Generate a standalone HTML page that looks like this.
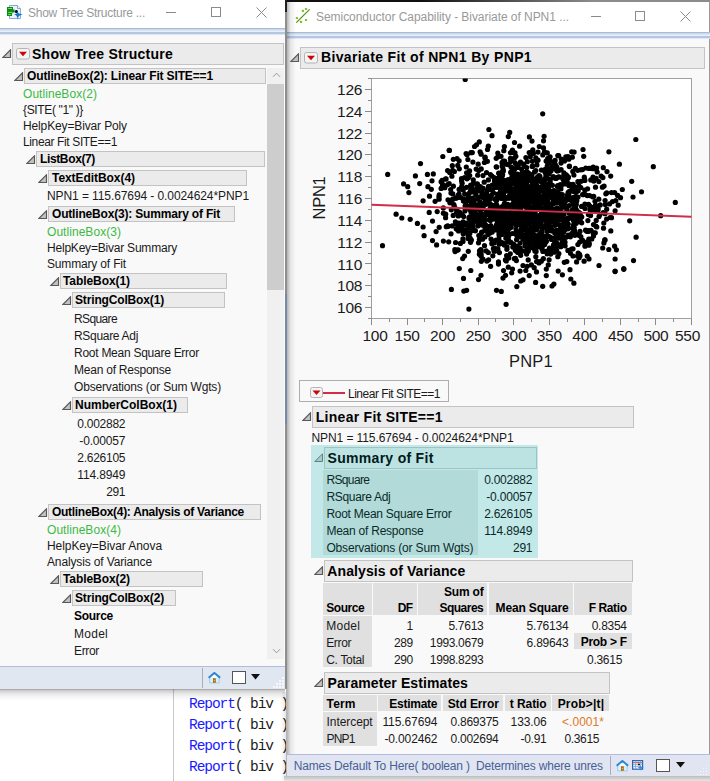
<!DOCTYPE html>
<html><head><meta charset="utf-8"><title>JMP</title><style>
html,body{margin:0;padding:0}
body{width:710px;height:781px;overflow:hidden;position:relative;background:#fff;font-family:"Liberation Sans", sans-serif;color:#1a1a1a}
div,span,svg{position:absolute}
span{white-space:pre}
span span{position:static}
</style></head><body>
<div style="left:0px;top:689px;width:287px;height:92px;background:#ffffff;"></div>
<div style="left:173px;top:689px;width:1px;height:92px;background:#c8c8c8;"></div>
<span style="top:694.00px;font-size:14.5px;line-height:20px;color:#202020;letter-spacing:-1.072px;font-family:'Liberation Mono', monospace;left:189px;"><span style="color:#1a1aff">Report</span>( biv )</span>
<span style="top:715.00px;font-size:14.5px;line-height:20px;color:#202020;letter-spacing:-1.072px;font-family:'Liberation Mono', monospace;left:189px;"><span style="color:#1a1aff">Report</span>( biv )</span>
<span style="top:736.00px;font-size:14.5px;line-height:20px;color:#202020;letter-spacing:-1.072px;font-family:'Liberation Mono', monospace;left:189px;"><span style="color:#1a1aff">Report</span>( biv )</span>
<span style="top:757.00px;font-size:14.5px;line-height:20px;color:#202020;letter-spacing:-1.072px;font-family:'Liberation Mono', monospace;left:189px;"><span style="color:#1a1aff">Report</span>( biv )</span>
<div style="left:0px;top:0px;width:285px;height:689px;background:#f9f9f9;"></div>
<div style="left:0px;top:0px;width:285px;height:28px;background:#ffffff;"></div>
<div style="left:0;top:28px;width:285px;height:7px;background:linear-gradient(#a7bcd8 0,#a7bcd8 1px,#c9d8ea 1px,#c9d8ea 2px,#dbe5f1 2px,#dbe5f1 3px,#e9eff6 3px,#e9eff6 4px,#b4c7e0 4px,#b4c7e0 6px,#dde6f1 6px)"></div>
<svg style="left:6px;top:4px" width="19" height="17" viewBox="6 4 19 17">
<path d="M9.5 5.5 H17.5 L20.5 8.5 V18.5 H9.5 Z" fill="#eaf1fa" stroke="#86aad8"/>
<path d="M17.5 5.5 V8.5 H20.5" fill="#f8fbff" stroke="#86aad8"/>
<path d="M7 7 H13 V9.6 H14.6 V12.6 H13 V13.2 H12 V16 H7 Z" fill="#0c8c0c"/>
<path d="M8.2 8.5 H12 M8.2 12.4 H12.6 M8.2 14.5 H10.8" stroke="#8fe08f" stroke-width="0.9"/>
<circle cx="16.4" cy="11.5" r="1.6" fill="#050505"/>
<path d="M17.6 11.3 Q17.75 14.2 23 14.4 Q17.75 14.6 17.6 19.9 Q17.4 14.6 14 14.4 Q17.4 14.2 17.6 11.3 Z" fill="#1478c8"/><circle cx="17.6" cy="14.4" r="1" fill="#1478c8"/>
</svg>
<span style="top:5.00px;font-size:12px;line-height:17px;color:#999999;letter-spacing:-0.249px;left:28px;">Show Tree Structure ...</span>
<div style="left:166px;top:12px;width:10px;height:1px;background:#8a8a8a;"></div>
<div style="left:211px;top:7px;width:10px;height:10px;border:1px solid #8a8a8a;box-sizing:border-box;"></div>
<svg style="left:256px;top:7px" width="11" height="11" viewBox="0 0 11 11"><path d="M0.5 0.5 L10.5 10.5 M10.5 0.5 L0.5 10.5" stroke="#8a8a8a" stroke-width="1" fill="none"/></svg>
<div style="left:12px;top:43px;width:272px;height:22px;background:#ebebeb;border:1px solid #c3c3c3;box-sizing:border-box;"></div>
<svg style="left:2px;top:48.6px" width="10" height="10" viewBox="0 0 10 10"><path d="M8.5 0.8 L8.5 8.5 L0.8 8.5 Z" fill="#c2c2c2" stroke="#585858" stroke-width="1.15"/></svg>
<svg style="left:16px;top:48px" width="14" height="11.5" viewBox="0 0 14 11.5"><rect x="0.5" y="0.5" width="13" height="10.5" rx="2" fill="#f4f4f4" stroke="#b4b4b4"/><path d="M3.0 3.75 L11.0 3.75 L7.0 8.25 Z" fill="#cc0505"/></svg>
<span style="top:44.00px;font-size:14px;line-height:20px;font-weight:700;color:#000;letter-spacing:0.255px;left:32px;">Show Tree Structure</span>
<div style="left:24px;top:68px;width:242px;height:16px;background:#ebebeb;border:1px solid #c3c3c3;box-sizing:border-box;"></div>
<svg style="left:13.5px;top:72.0px" width="10" height="10" viewBox="0 0 10 10"><path d="M8.5 0.8 L8.5 8.5 L0.8 8.5 Z" fill="#c2c2c2" stroke="#585858" stroke-width="1.15"/></svg>
<span style="top:68.00px;font-size:12px;line-height:17px;font-weight:700;color:#000;letter-spacing:-0.143px;left:27px;">OutlineBox(2): Linear Fit SITE==1</span>
<span style="top:86.00px;font-size:12px;line-height:17px;color:#3cb944;letter-spacing:0.048px;left:23px;">OutlineBox(2)</span>
<span style="top:102.00px;font-size:12px;line-height:17px;letter-spacing:-0.35px;left:23px;">{SITE( "1" )}</span>
<span style="top:118.00px;font-size:12px;line-height:17px;letter-spacing:-0.133px;left:23px;">HelpKey=Bivar Poly</span>
<span style="top:134.00px;font-size:12px;line-height:17px;letter-spacing:-0.373px;left:23px;">Linear Fit SITE==1</span>
<div style="left:36px;top:151px;width:229px;height:16px;background:#ebebeb;border:1px solid #c3c3c3;box-sizing:border-box;"></div>
<svg style="left:25.5px;top:155.0px" width="10" height="10" viewBox="0 0 10 10"><path d="M8.5 0.8 L8.5 8.5 L0.8 8.5 Z" fill="#c2c2c2" stroke="#585858" stroke-width="1.15"/></svg>
<span style="top:151.00px;font-size:12px;line-height:17px;font-weight:700;color:#000;letter-spacing:-0.367px;left:40px;">ListBox(7)</span>
<div style="left:48px;top:170px;width:199px;height:16px;background:#ebebeb;border:1px solid #c3c3c3;box-sizing:border-box;"></div>
<svg style="left:37.5px;top:174.0px" width="10" height="10" viewBox="0 0 10 10"><path d="M8.5 0.8 L8.5 8.5 L0.8 8.5 Z" fill="#c2c2c2" stroke="#585858" stroke-width="1.15"/></svg>
<span style="top:170.00px;font-size:12px;line-height:17px;font-weight:700;color:#000;letter-spacing:-0.057px;left:52px;">TextEditBox(4)</span>
<span style="top:188.00px;font-size:12px;line-height:17px;letter-spacing:-0.089px;left:47px;">NPN1 = 115.67694 - 0.0024624*PNP1</span>
<div style="left:48px;top:206px;width:187px;height:16px;background:#ebebeb;border:1px solid #c3c3c3;box-sizing:border-box;"></div>
<svg style="left:37.5px;top:210.0px" width="10" height="10" viewBox="0 0 10 10"><path d="M8.5 0.8 L8.5 8.5 L0.8 8.5 Z" fill="#c2c2c2" stroke="#585858" stroke-width="1.15"/></svg>
<span style="top:206.00px;font-size:12px;line-height:17px;font-weight:700;color:#000;letter-spacing:-0.184px;left:52px;">OutlineBox(3): Summary of Fit</span>
<span style="top:224.00px;font-size:12px;line-height:17px;color:#3cb944;letter-spacing:0.048px;left:47px;">OutlineBox(3)</span>
<span style="top:240.00px;font-size:12px;line-height:17px;letter-spacing:-0.209px;left:47px;">HelpKey=Bivar Summary</span>
<span style="top:256.00px;font-size:12px;line-height:17px;letter-spacing:-0.169px;left:47px;">Summary of Fit</span>
<div style="left:60px;top:273px;width:167px;height:16px;background:#ebebeb;border:1px solid #c3c3c3;box-sizing:border-box;"></div>
<svg style="left:49.5px;top:277.0px" width="10" height="10" viewBox="0 0 10 10"><path d="M8.5 0.8 L8.5 8.5 L0.8 8.5 Z" fill="#c2c2c2" stroke="#585858" stroke-width="1.15"/></svg>
<span style="top:273.00px;font-size:12px;line-height:17px;font-weight:700;color:#000;letter-spacing:-0.072px;left:63px;">TableBox(1)</span>
<div style="left:72px;top:292px;width:153px;height:16px;background:#ebebeb;border:1px solid #c3c3c3;box-sizing:border-box;"></div>
<svg style="left:61.5px;top:296.0px" width="10" height="10" viewBox="0 0 10 10"><path d="M8.5 0.8 L8.5 8.5 L0.8 8.5 Z" fill="#c2c2c2" stroke="#585858" stroke-width="1.15"/></svg>
<span style="top:292.00px;font-size:12px;line-height:17px;font-weight:700;color:#000;letter-spacing:-0.156px;left:75px;">StringColBox(1)</span>
<span style="top:311.00px;font-size:12px;line-height:17px;letter-spacing:-0.625px;left:74px;">RSquare</span>
<span style="top:328.00px;font-size:12px;line-height:17px;letter-spacing:-0.308px;left:74px;">RSquare Adj</span>
<span style="top:345.00px;font-size:12px;line-height:17px;letter-spacing:-0.261px;left:74px;">Root Mean Square Error</span>
<span style="top:362.00px;font-size:12px;line-height:17px;letter-spacing:-0.233px;left:74px;">Mean of Response</span>
<span style="top:379.00px;font-size:12px;line-height:17px;letter-spacing:-0.168px;left:74px;">Observations (or Sum Wgts)</span>
<div style="left:72px;top:397px;width:116px;height:16px;background:#ebebeb;border:1px solid #c3c3c3;box-sizing:border-box;"></div>
<svg style="left:61.5px;top:401.0px" width="10" height="10" viewBox="0 0 10 10"><path d="M8.5 0.8 L8.5 8.5 L0.8 8.5 Z" fill="#c2c2c2" stroke="#585858" stroke-width="1.15"/></svg>
<span style="top:397.00px;font-size:12px;line-height:17px;font-weight:700;color:#000;letter-spacing:-0.001px;left:75px;">NumberColBox(1)</span>
<span style="top:416.00px;font-size:12px;line-height:17px;letter-spacing:-0.258px;right:584.76px;">0.002882</span>
<span style="top:433.00px;font-size:12px;line-height:17px;letter-spacing:-0.172px;right:584.67px;">-0.00057</span>
<span style="top:450.00px;font-size:12px;line-height:17px;letter-spacing:-0.258px;right:584.76px;">2.626105</span>
<span style="top:467.00px;font-size:12px;line-height:17px;letter-spacing:-0.146px;right:584.65px;">114.8949</span>
<span style="top:484.00px;font-size:12px;line-height:17px;letter-spacing:-0.344px;right:584.84px;">291</span>
<div style="left:48px;top:504px;width:213px;height:16px;background:#ebebeb;border:1px solid #c3c3c3;box-sizing:border-box;"></div>
<svg style="left:37.5px;top:508.0px" width="10" height="10" viewBox="0 0 10 10"><path d="M8.5 0.8 L8.5 8.5 L0.8 8.5 Z" fill="#c2c2c2" stroke="#585858" stroke-width="1.15"/></svg>
<span style="top:504.00px;font-size:12px;line-height:17px;font-weight:700;color:#000;letter-spacing:-0.294px;left:52px;">OutlineBox(4): Analysis of Variance</span>
<span style="top:522.00px;font-size:12px;line-height:17px;color:#3cb944;letter-spacing:0.048px;left:47px;">OutlineBox(4)</span>
<span style="top:538.00px;font-size:12px;line-height:17px;letter-spacing:-0.074px;left:47px;">HelpKey=Bivar Anova</span>
<span style="top:554.00px;font-size:12px;line-height:17px;letter-spacing:-0.142px;left:47px;">Analysis of Variance</span>
<div style="left:60px;top:571px;width:143px;height:16px;background:#ebebeb;border:1px solid #c3c3c3;box-sizing:border-box;"></div>
<svg style="left:49.5px;top:575.0px" width="10" height="10" viewBox="0 0 10 10"><path d="M8.5 0.8 L8.5 8.5 L0.8 8.5 Z" fill="#c2c2c2" stroke="#585858" stroke-width="1.15"/></svg>
<span style="top:571.00px;font-size:12px;line-height:17px;font-weight:700;color:#000;letter-spacing:-0.072px;left:63px;">TableBox(2)</span>
<div style="left:72px;top:590px;width:104px;height:16px;background:#ebebeb;border:1px solid #c3c3c3;box-sizing:border-box;"></div>
<svg style="left:61.5px;top:594.0px" width="10" height="10" viewBox="0 0 10 10"><path d="M8.5 0.8 L8.5 8.5 L0.8 8.5 Z" fill="#c2c2c2" stroke="#585858" stroke-width="1.15"/></svg>
<span style="top:590.00px;font-size:12px;line-height:17px;font-weight:700;color:#000;letter-spacing:-0.156px;left:75px;">StringColBox(2)</span>
<span style="top:608.00px;font-size:12px;line-height:17px;font-weight:700;color:#000;letter-spacing:-0.281px;left:74px;">Source</span>
<span style="top:626.00px;font-size:12px;line-height:17px;letter-spacing:0.263px;left:74px;">Model</span>
<span style="top:643.00px;font-size:12px;line-height:17px;letter-spacing:-0.334px;left:74px;">Error</span>
<div style="left:267px;top:68px;width:17px;height:591px;background:#f0f0f0;"></div>
<div style="left:284px;top:68px;width:1px;height:591px;background:#fcfcfc;"></div>
<div style="left:267px;top:83.5px;width:17px;height:206.3px;background:#cdcdcd;"></div>
<svg style="left:272px;top:72px" width="9" height="6" viewBox="0 0 9 6"><path d="M1 4.8 L4.5 1.2 L8 4.8" stroke="#9a9a9a" fill="none"/></svg>
<svg style="left:272px;top:648px" width="9" height="6" viewBox="0 0 9 6"><path d="M1 1.2 L4.5 4.8 L8 1.2" stroke="#9a9a9a" fill="none"/></svg>
<div style="left:0px;top:666px;width:285px;height:23.3px;background:#e1e7f1;"></div>
<div style="left:0px;top:666px;width:285px;height:1px;background:#b4b9e2;"></div>
<div style="left:202px;top:668px;width:1px;height:20px;background:#a9adc0;"></div>
<svg style="left:208px;top:671.5px" width="13" height="12" viewBox="0 0 13 12"><path d="M1.6 5.6 H11.2 V10.9 H1.6 Z" fill="#dcedf8" stroke="#8fc6e8" stroke-width="0.8"/><path d="M0.6 5.8 L6.4 0.9 L12.2 5.8" stroke="#2a86d6" stroke-width="1.9" fill="none" stroke-linejoin="miter"/><path d="M6.4 2.6 L2.4 6 H10.4 Z" fill="#f4fafe"/><rect x="5" y="6.2" width="2.8" height="4.6" fill="#a8700f"/><rect x="5.9" y="8" width="0.9" height="1" fill="#e8c878"/></svg>
<div style="left:232px;top:671px;width:13.8px;height:12.8px;background:#fff;border:1px solid #555;box-sizing:border-box;"></div>
<svg style="left:251px;top:674px" width="9" height="6" viewBox="0 0 9 6"><path d="M0 0 H9 L4.5 5.5 Z" fill="#111"/></svg>
<div style="left:282px;top:677px;width:1.6px;height:1.6px;background:#f6f8fc;"></div>
<div style="left:282px;top:680px;width:1.6px;height:1.6px;background:#f6f8fc;"></div>
<div style="left:279px;top:680px;width:1.6px;height:1.6px;background:#f6f8fc;"></div>
<div style="left:282px;top:683px;width:1.6px;height:1.6px;background:#f6f8fc;"></div>
<div style="left:279px;top:683px;width:1.6px;height:1.6px;background:#f6f8fc;"></div>
<div style="left:276px;top:683px;width:1.6px;height:1.6px;background:#f6f8fc;"></div>
<div style="left:282px;top:686px;width:1.6px;height:1.6px;background:#f6f8fc;"></div>
<div style="left:279px;top:686px;width:1.6px;height:1.6px;background:#f6f8fc;"></div>
<div style="left:276px;top:686px;width:1.6px;height:1.6px;background:#f6f8fc;"></div>
<div style="left:273px;top:686px;width:1.6px;height:1.6px;background:#f6f8fc;"></div>
<div style="left:0;top:689px;width:285px;height:12px;background:linear-gradient(rgba(0,0,0,0.40),rgba(0,0,0,0.20) 12%,rgba(0,0,0,0.09) 40%,rgba(0,0,0,0.03) 70%,rgba(0,0,0,0))"></div>
<div style="left:285px;top:0px;width:425px;height:2px;background:#101010;"></div>
<div style="left:420px;top:0;width:290px;height:2px;background:linear-gradient(90deg,#101010,#8c8c8c 60%)"></div>
<div style="left:285px;top:0px;width:2px;height:689px;background:#8e8e8e;"></div>
<div style="left:285px;top:0px;width:2px;height:12px;background:#202020;"></div>
<div style="left:285px;top:294px;width:2px;height:130px;background:#7488a8;"></div>
<div style="left:286px;top:689px;width:1px;height:87px;background:#b4b4b4;"></div>
<div style="left:281px;top:692px;width:5px;height:88px;background:linear-gradient(90deg,rgba(0,0,0,0),rgba(0,0,0,0.10))"></div>
<div style="left:287px;top:2px;width:423px;height:779px;background:#f9f9f9;"></div>
<div style="left:287px;top:1.5px;width:423px;height:30.5px;background:#ffffff;"></div>
<div style="left:709px;top:1px;width:1px;height:775px;background:#9a9a9a;"></div>
<div style="left:287px;top:32px;width:423px;height:7px;background:linear-gradient(#a7bcd8 0,#a7bcd8 1px,#c9d8ea 1px,#c9d8ea 2px,#dbe5f1 2px,#dbe5f1 3px,#e9eff6 3px,#e9eff6 4px,#b4c7e0 4px,#b4c7e0 6px,#dde6f1 6px)"></div>
<div style="left:287px;top:2px;width:9px;height:779px;background:linear-gradient(90deg,rgba(0,0,0,0.28),rgba(0,0,0,0.08) 40%,rgba(0,0,0,0))"></div>
<svg style="left:294px;top:6px" width="18" height="19" viewBox="294 6 18 19">
<path d="M296.3 22.7 L309.6 9.4" stroke="#4f8f16" stroke-width="1.2"/>
<g fill="#7ac51d"><rect x="304.9" y="7.9" width="2.2" height="2.2" rx="0.6"/><rect x="301.8" y="9.8" width="2.2" height="2.2" rx="0.6"/><rect x="295.8" y="16.9" width="2.2" height="2.2" rx="0.6"/><rect x="299.9" y="20.7" width="2.2" height="2.2" rx="0.6"/><rect x="304.9" y="18.9" width="2.2" height="2.2" rx="0.6"/></g></svg>
<span style="top:9.00px;font-size:12px;line-height:17px;color:#999999;letter-spacing:-0.051px;left:316px;">Semiconductor Capability - Bivariate of NPN1 ...</span>
<div style="left:591px;top:16px;width:10px;height:1px;background:#8a8a8a;"></div>
<div style="left:635px;top:11px;width:10px;height:10px;border:1px solid #8a8a8a;box-sizing:border-box;"></div>
<svg style="left:680px;top:11px" width="11" height="11" viewBox="0 0 11 11"><path d="M0.5 0.5 L10.5 10.5 M10.5 0.5 L0.5 10.5" stroke="#8a8a8a" stroke-width="1" fill="none"/></svg>
<div style="left:300px;top:47px;width:405px;height:22px;background:#ebebeb;border:1px solid #c3c3c3;box-sizing:border-box;"></div>
<svg style="left:290px;top:53px" width="10" height="10" viewBox="0 0 10 10"><path d="M8.5 0.8 L8.5 8.5 L0.8 8.5 Z" fill="#c2c2c2" stroke="#585858" stroke-width="1.15"/></svg>
<svg style="left:304px;top:52px" width="14" height="11.5" viewBox="0 0 14 11.5"><rect x="0.5" y="0.5" width="13" height="10.5" rx="2" fill="#f4f4f4" stroke="#b4b4b4"/><path d="M3.0 3.75 L11.0 3.75 L7.0 8.25 Z" fill="#cc0505"/></svg>
<span style="top:47.00px;font-size:14px;line-height:20px;font-weight:700;color:#000;letter-spacing:0.354px;left:321px;">Bivariate Fit of NPN1 By PNP1</span>
<div style="left:371.0px;top:78.0px;width:321px;height:241px;background:#ffffff;border:1px solid #a0a0a0;box-sizing:border-box;"></div>
<svg style="left:0;top:0" width="710" height="400" viewBox="0 0 710 400"><path d="M365.0 307.5 H371.5 M365.0 285.5 H371.5 M365.0 263.5 H371.5 M365.0 242.5 H371.5 M365.0 220.5 H371.5 M365.0 198.5 H371.5 M365.0 176.5 H371.5 M365.0 154.5 H371.5 M365.0 133.5 H371.5 M365.0 111.5 H371.5 M365.0 89.5 H371.5 M368.0 318.5 H371.5 M368.0 296.5 H371.5 M368.0 274.5 H371.5 M368.0 253.5 H371.5 M368.0 231.5 H371.5 M368.0 209.5 H371.5 M368.0 187.5 H371.5 M368.0 165.5 H371.5 M368.0 143.5 H371.5 M368.0 122.5 H371.5 M368.0 100.5 H371.5 M368.0 78.5 H371.5 M371.5 318.5 V325.0 M407.5 318.5 V325.0 M442.5 318.5 V325.0 M478.5 318.5 V325.0 M513.5 318.5 V325.0 M549.5 318.5 V325.0 M584.5 318.5 V325.0 M620.5 318.5 V325.0 M655.5 318.5 V325.0 M691.5 318.5 V325.0 M389.5 318.5 V322.0 M424.5 318.5 V322.0 M460.5 318.5 V322.0 M495.5 318.5 V322.0 M531.5 318.5 V322.0 M567.5 318.5 V322.0 M602.5 318.5 V322.0 M638.5 318.5 V322.0 M673.5 318.5 V322.0" stroke="#8c8c8c" stroke-width="1" fill="none"/><clipPath id="pc"><rect x="371.5" y="78.5" width="320" height="240"/></clipPath><g clip-path="url(#pc)" fill="#000"><circle cx="387.7" cy="174.4" r="2.6"/><circle cx="382.5" cy="245.7" r="2.6"/><circle cx="403.6" cy="183.9" r="2.6"/><circle cx="407.7" cy="186.7" r="2.6"/><circle cx="408.9" cy="192.6" r="2.6"/><circle cx="420.5" cy="163.6" r="2.6"/><circle cx="415.4" cy="175.9" r="2.6"/><circle cx="419.7" cy="183.6" r="2.6"/><circle cx="427.4" cy="174.4" r="2.6"/><circle cx="433.3" cy="173.9" r="2.6"/><circle cx="432.0" cy="180.8" r="2.6"/><circle cx="427.9" cy="186.7" r="2.6"/><circle cx="431.3" cy="189.3" r="2.6"/><circle cx="429.5" cy="196.2" r="2.6"/><circle cx="423.1" cy="200.8" r="2.6"/><circle cx="396.1" cy="214.2" r="2.6"/><circle cx="401.8" cy="218.0" r="2.6"/><circle cx="410.2" cy="219.3" r="2.6"/><circle cx="417.4" cy="223.4" r="2.6"/><circle cx="423.1" cy="227.0" r="2.6"/><circle cx="424.1" cy="235.7" r="2.6"/><circle cx="432.5" cy="221.1" r="2.6"/><circle cx="429.2" cy="212.4" r="2.6"/><circle cx="437.2" cy="211.6" r="2.6"/><circle cx="436.1" cy="231.6" r="2.6"/><circle cx="432.5" cy="240.6" r="2.6"/><circle cx="436.6" cy="244.9" r="2.6"/><circle cx="435.1" cy="201.3" r="2.6"/><circle cx="442.8" cy="156.5" r="2.6"/><circle cx="449.2" cy="150.3" r="2.6"/><circle cx="453.3" cy="159.3" r="2.6"/><circle cx="452.3" cy="165.7" r="2.6"/><circle cx="449.7" cy="172.4" r="2.6"/><circle cx="445.4" cy="179.0" r="2.6"/><circle cx="442.8" cy="184.7" r="2.6"/><circle cx="444.8" cy="187.7" r="2.6"/><circle cx="439.2" cy="194.9" r="2.6"/><circle cx="635.8" cy="139.5" r="2.6"/><circle cx="619.4" cy="164.2" r="2.6"/><circle cx="653.3" cy="166.7" r="2.6"/><circle cx="631.7" cy="181.3" r="2.6"/><circle cx="641.5" cy="191.8" r="2.6"/><circle cx="622.3" cy="189.5" r="2.6"/><circle cx="614.6" cy="192.6" r="2.6"/><circle cx="617.6" cy="195.4" r="2.6"/><circle cx="620.5" cy="197.7" r="2.6"/><circle cx="633.0" cy="197.0" r="2.6"/><circle cx="615.8" cy="200.6" r="2.6"/><circle cx="612.5" cy="201.6" r="2.6"/><circle cx="615.1" cy="210.8" r="2.6"/><circle cx="618.2" cy="205.2" r="2.6"/><circle cx="675.3" cy="202.4" r="2.6"/><circle cx="660.7" cy="215.7" r="2.6"/><circle cx="629.7" cy="220.8" r="2.6"/><circle cx="636.1" cy="237.2" r="2.6"/><circle cx="614.6" cy="246.2" r="2.6"/><circle cx="616.4" cy="249.8" r="2.6"/><circle cx="615.1" cy="259.0" r="2.6"/><circle cx="633.5" cy="260.6" r="2.6"/><circle cx="623.8" cy="269.3" r="2.6"/><circle cx="615.1" cy="271.6" r="2.6"/><circle cx="465.2" cy="79.4" r="2.6"/><circle cx="542.7" cy="113.8" r="2.6"/><circle cx="488.9" cy="129.5" r="2.6"/><circle cx="492.0" cy="135.7" r="2.6"/><circle cx="509.7" cy="132.4" r="2.6"/><circle cx="508.3" cy="136.6" r="2.6"/><circle cx="529.4" cy="136.9" r="2.6"/><circle cx="532.0" cy="141.1" r="2.6"/><circle cx="544.1" cy="136.3" r="2.6"/><circle cx="543.5" cy="140.8" r="2.6"/><circle cx="514.5" cy="142.5" r="2.6"/><circle cx="519.6" cy="146.2" r="2.6"/><circle cx="539.3" cy="146.5" r="2.6"/><circle cx="543.5" cy="147.9" r="2.6"/><circle cx="479.3" cy="141.9" r="2.6"/><circle cx="476.5" cy="144.8" r="2.6"/><circle cx="474.5" cy="146.5" r="2.6"/><circle cx="488.3" cy="146.2" r="2.6"/><circle cx="487.5" cy="149.5" r="2.6"/><circle cx="504.4" cy="146.5" r="2.6"/><circle cx="503.8" cy="150.7" r="2.6"/><circle cx="512.5" cy="150.1" r="2.6"/><circle cx="449.4" cy="150.4" r="2.6"/><circle cx="472.3" cy="152.6" r="2.6"/><circle cx="466.1" cy="153.5" r="2.6"/><circle cx="480.1" cy="151.8" r="2.6"/><circle cx="532.8" cy="149.8" r="2.6"/><circle cx="529.2" cy="152.6" r="2.6"/><circle cx="583.0" cy="149.5" r="2.6"/><circle cx="608.9" cy="151.8" r="2.6"/><circle cx="571.7" cy="151.8" r="2.6"/><circle cx="459.3" cy="268.6" r="2.6"/><circle cx="470.8" cy="270.5" r="2.6"/><circle cx="463.5" cy="278.4" r="2.6"/><circle cx="481.0" cy="275.3" r="2.6"/><circle cx="478.5" cy="279.6" r="2.6"/><circle cx="451.4" cy="289.4" r="2.6"/><circle cx="463.8" cy="291.1" r="2.6"/><circle cx="466.6" cy="290.3" r="2.6"/><circle cx="496.5" cy="290.3" r="2.6"/><circle cx="501.3" cy="291.4" r="2.6"/><circle cx="468.9" cy="309.1" r="2.6"/><circle cx="506.1" cy="304.3" r="2.6"/><circle cx="503.5" cy="270.5" r="2.6"/><circle cx="508.3" cy="267.2" r="2.6"/><circle cx="512.5" cy="269.1" r="2.6"/><circle cx="511.7" cy="272.8" r="2.6"/><circle cx="505.5" cy="275.3" r="2.6"/><circle cx="503.0" cy="278.1" r="2.6"/><circle cx="516.8" cy="286.6" r="2.6"/><circle cx="520.7" cy="281.0" r="2.6"/><circle cx="523.0" cy="279.8" r="2.6"/><circle cx="529.2" cy="275.6" r="2.6"/><circle cx="525.8" cy="270.5" r="2.6"/><circle cx="520.1" cy="271.1" r="2.6"/><circle cx="535.6" cy="282.4" r="2.6"/><circle cx="542.7" cy="286.3" r="2.6"/><circle cx="552.0" cy="286.0" r="2.6"/><circle cx="553.9" cy="284.1" r="2.6"/><circle cx="546.3" cy="275.6" r="2.6"/><circle cx="546.3" cy="269.1" r="2.6"/><circle cx="534.2" cy="267.7" r="2.6"/><circle cx="536.5" cy="271.9" r="2.6"/><circle cx="558.2" cy="271.1" r="2.6"/><circle cx="562.4" cy="274.8" r="2.6"/><circle cx="570.0" cy="269.7" r="2.6"/><circle cx="570.8" cy="279.0" r="2.6"/><circle cx="573.9" cy="283.2" r="2.6"/><circle cx="599.0" cy="265.5" r="2.6"/><circle cx="615.1" cy="271.1" r="2.6"/><circle cx="623.8" cy="268.6" r="2.6"/><circle cx="490.6" cy="266.3" r="2.6"/><circle cx="498.5" cy="264.1" r="2.6"/><circle cx="523.0" cy="265.5" r="2.6"/><circle cx="527.2" cy="266.3" r="2.6"/><circle cx="531.4" cy="264.9" r="2.6"/><circle cx="548.3" cy="264.9" r="2.6"/><circle cx="535.8" cy="170.5" r="2.6"/><circle cx="496.4" cy="178.6" r="2.6"/><circle cx="522.3" cy="217.5" r="2.6"/><circle cx="605.2" cy="204.5" r="2.6"/><circle cx="530.6" cy="186.7" r="2.6"/><circle cx="575.5" cy="210.4" r="2.6"/><circle cx="554.8" cy="239.7" r="2.6"/><circle cx="518.1" cy="223.0" r="2.6"/><circle cx="481.1" cy="256.3" r="2.6"/><circle cx="469.7" cy="216.8" r="2.6"/><circle cx="525.6" cy="219.4" r="2.6"/><circle cx="534.9" cy="250.9" r="2.6"/><circle cx="529.2" cy="202.0" r="2.6"/><circle cx="561.1" cy="235.7" r="2.6"/><circle cx="477.7" cy="175.2" r="2.6"/><circle cx="447.7" cy="184.6" r="2.6"/><circle cx="544.8" cy="219.1" r="2.6"/><circle cx="549.8" cy="193.0" r="2.6"/><circle cx="572.4" cy="216.6" r="2.6"/><circle cx="509.5" cy="228.2" r="2.6"/><circle cx="494.3" cy="210.8" r="2.6"/><circle cx="502.0" cy="176.2" r="2.6"/><circle cx="460.4" cy="243.4" r="2.6"/><circle cx="521.3" cy="225.7" r="2.6"/><circle cx="573.4" cy="232.1" r="2.6"/><circle cx="526.3" cy="230.3" r="2.6"/><circle cx="556.8" cy="244.8" r="2.6"/><circle cx="529.2" cy="198.4" r="2.6"/><circle cx="590.8" cy="179.9" r="2.6"/><circle cx="513.6" cy="199.9" r="2.6"/><circle cx="514.3" cy="158.2" r="2.6"/><circle cx="540.3" cy="216.1" r="2.6"/><circle cx="523.5" cy="215.6" r="2.6"/><circle cx="525.4" cy="236.7" r="2.6"/><circle cx="526.6" cy="197.8" r="2.6"/><circle cx="524.4" cy="214.0" r="2.6"/><circle cx="545.0" cy="179.3" r="2.6"/><circle cx="515.0" cy="221.0" r="2.6"/><circle cx="606.7" cy="192.9" r="2.6"/><circle cx="562.0" cy="227.7" r="2.6"/><circle cx="487.1" cy="200.1" r="2.6"/><circle cx="500.3" cy="242.3" r="2.6"/><circle cx="482.4" cy="225.1" r="2.6"/><circle cx="574.7" cy="222.9" r="2.6"/><circle cx="476.6" cy="188.6" r="2.6"/><circle cx="534.7" cy="183.2" r="2.6"/><circle cx="578.4" cy="214.7" r="2.6"/><circle cx="526.6" cy="210.8" r="2.6"/><circle cx="488.6" cy="188.6" r="2.6"/><circle cx="584.9" cy="204.0" r="2.6"/><circle cx="523.1" cy="217.5" r="2.6"/><circle cx="502.2" cy="234.4" r="2.6"/><circle cx="516.8" cy="235.6" r="2.6"/><circle cx="515.4" cy="258.4" r="2.6"/><circle cx="545.7" cy="207.9" r="2.6"/><circle cx="531.9" cy="175.1" r="2.6"/><circle cx="504.0" cy="224.4" r="2.6"/><circle cx="510.4" cy="189.1" r="2.6"/><circle cx="497.0" cy="178.8" r="2.6"/><circle cx="520.6" cy="180.7" r="2.6"/><circle cx="533.5" cy="216.6" r="2.6"/><circle cx="475.4" cy="230.8" r="2.6"/><circle cx="522.2" cy="188.9" r="2.6"/><circle cx="541.6" cy="231.1" r="2.6"/><circle cx="547.9" cy="178.7" r="2.6"/><circle cx="526.5" cy="223.1" r="2.6"/><circle cx="517.1" cy="184.2" r="2.6"/><circle cx="552.9" cy="238.3" r="2.6"/><circle cx="546.6" cy="224.3" r="2.6"/><circle cx="503.4" cy="170.9" r="2.6"/><circle cx="563.7" cy="231.9" r="2.6"/><circle cx="535.3" cy="193.8" r="2.6"/><circle cx="507.7" cy="213.2" r="2.6"/><circle cx="544.8" cy="186.4" r="2.6"/><circle cx="551.6" cy="251.1" r="2.6"/><circle cx="544.4" cy="236.3" r="2.6"/><circle cx="554.1" cy="190.6" r="2.6"/><circle cx="540.5" cy="233.2" r="2.6"/><circle cx="509.5" cy="182.9" r="2.6"/><circle cx="497.7" cy="194.0" r="2.6"/><circle cx="551.9" cy="218.1" r="2.6"/><circle cx="446.1" cy="178.9" r="2.6"/><circle cx="556.6" cy="219.1" r="2.6"/><circle cx="508.1" cy="241.5" r="2.6"/><circle cx="523.7" cy="181.9" r="2.6"/><circle cx="534.2" cy="197.9" r="2.6"/><circle cx="505.4" cy="222.9" r="2.6"/><circle cx="536.5" cy="218.2" r="2.6"/><circle cx="580.8" cy="236.6" r="2.6"/><circle cx="604.8" cy="239.9" r="2.6"/><circle cx="572.9" cy="233.4" r="2.6"/><circle cx="595.5" cy="205.2" r="2.6"/><circle cx="547.5" cy="186.3" r="2.6"/><circle cx="507.8" cy="241.8" r="2.6"/><circle cx="454.4" cy="171.5" r="2.6"/><circle cx="505.5" cy="227.8" r="2.6"/><circle cx="465.8" cy="201.7" r="2.6"/><circle cx="517.0" cy="192.9" r="2.6"/><circle cx="463.1" cy="221.8" r="2.6"/><circle cx="564.5" cy="160.9" r="2.6"/><circle cx="593.5" cy="236.0" r="2.6"/><circle cx="534.3" cy="212.8" r="2.6"/><circle cx="479.4" cy="254.2" r="2.6"/><circle cx="561.3" cy="201.8" r="2.6"/><circle cx="526.7" cy="171.6" r="2.6"/><circle cx="493.7" cy="193.0" r="2.6"/><circle cx="532.6" cy="211.3" r="2.6"/><circle cx="551.0" cy="203.9" r="2.6"/><circle cx="542.5" cy="201.2" r="2.6"/><circle cx="606.6" cy="219.1" r="2.6"/><circle cx="571.1" cy="190.5" r="2.6"/><circle cx="518.8" cy="184.7" r="2.6"/><circle cx="499.3" cy="173.3" r="2.6"/><circle cx="501.1" cy="224.6" r="2.6"/><circle cx="544.6" cy="183.5" r="2.6"/><circle cx="567.1" cy="181.6" r="2.6"/><circle cx="524.3" cy="239.1" r="2.6"/><circle cx="553.3" cy="200.0" r="2.6"/><circle cx="495.6" cy="179.1" r="2.6"/><circle cx="539.9" cy="239.2" r="2.6"/><circle cx="549.2" cy="250.6" r="2.6"/><circle cx="498.5" cy="196.9" r="2.6"/><circle cx="472.4" cy="208.2" r="2.6"/><circle cx="480.3" cy="186.5" r="2.6"/><circle cx="504.3" cy="203.7" r="2.6"/><circle cx="474.5" cy="220.1" r="2.6"/><circle cx="568.6" cy="195.2" r="2.6"/><circle cx="461.6" cy="180.7" r="2.6"/><circle cx="566.5" cy="221.1" r="2.6"/><circle cx="586.6" cy="242.3" r="2.6"/><circle cx="528.9" cy="174.8" r="2.6"/><circle cx="582.5" cy="169.6" r="2.6"/><circle cx="547.2" cy="253.9" r="2.6"/><circle cx="527.2" cy="249.3" r="2.6"/><circle cx="573.0" cy="184.4" r="2.6"/><circle cx="553.6" cy="208.9" r="2.6"/><circle cx="534.0" cy="218.7" r="2.6"/><circle cx="546.9" cy="201.7" r="2.6"/><circle cx="549.8" cy="222.7" r="2.6"/><circle cx="605.1" cy="200.6" r="2.6"/><circle cx="585.8" cy="168.0" r="2.6"/><circle cx="498.5" cy="261.9" r="2.6"/><circle cx="580.5" cy="221.5" r="2.6"/><circle cx="535.4" cy="217.5" r="2.6"/><circle cx="537.2" cy="246.4" r="2.6"/><circle cx="528.2" cy="223.8" r="2.6"/><circle cx="563.7" cy="199.1" r="2.6"/><circle cx="465.9" cy="232.2" r="2.6"/><circle cx="533.4" cy="189.9" r="2.6"/><circle cx="532.2" cy="166.4" r="2.6"/><circle cx="533.1" cy="240.5" r="2.6"/><circle cx="506.2" cy="186.3" r="2.6"/><circle cx="508.7" cy="183.3" r="2.6"/><circle cx="571.4" cy="191.1" r="2.6"/><circle cx="571.3" cy="214.8" r="2.6"/><circle cx="531.8" cy="227.8" r="2.6"/><circle cx="508.8" cy="258.1" r="2.6"/><circle cx="510.9" cy="242.7" r="2.6"/><circle cx="477.4" cy="204.9" r="2.6"/><circle cx="549.7" cy="220.0" r="2.6"/><circle cx="584.8" cy="180.2" r="2.6"/><circle cx="572.3" cy="228.2" r="2.6"/><circle cx="474.9" cy="192.1" r="2.6"/><circle cx="544.0" cy="186.8" r="2.6"/><circle cx="548.2" cy="170.2" r="2.6"/><circle cx="521.1" cy="188.7" r="2.6"/><circle cx="515.2" cy="162.8" r="2.6"/><circle cx="467.9" cy="177.8" r="2.6"/><circle cx="506.1" cy="221.8" r="2.6"/><circle cx="533.9" cy="202.8" r="2.6"/><circle cx="494.8" cy="205.5" r="2.6"/><circle cx="549.3" cy="183.5" r="2.6"/><circle cx="503.2" cy="161.2" r="2.6"/><circle cx="480.7" cy="204.0" r="2.6"/><circle cx="460.8" cy="197.6" r="2.6"/><circle cx="553.5" cy="245.1" r="2.6"/><circle cx="471.3" cy="203.6" r="2.6"/><circle cx="556.3" cy="234.0" r="2.6"/><circle cx="505.1" cy="204.8" r="2.6"/><circle cx="538.0" cy="160.2" r="2.6"/><circle cx="549.6" cy="227.8" r="2.6"/><circle cx="543.2" cy="187.1" r="2.6"/><circle cx="555.3" cy="164.6" r="2.6"/><circle cx="584.1" cy="261.2" r="2.6"/><circle cx="516.6" cy="179.3" r="2.6"/><circle cx="530.1" cy="222.5" r="2.6"/><circle cx="593.0" cy="177.0" r="2.6"/><circle cx="522.9" cy="181.2" r="2.6"/><circle cx="481.8" cy="232.0" r="2.6"/><circle cx="566.9" cy="208.2" r="2.6"/><circle cx="491.4" cy="195.4" r="2.6"/><circle cx="544.8" cy="169.5" r="2.6"/><circle cx="569.0" cy="218.0" r="2.6"/><circle cx="513.6" cy="213.7" r="2.6"/><circle cx="523.4" cy="164.0" r="2.6"/><circle cx="593.2" cy="167.2" r="2.6"/><circle cx="546.8" cy="217.0" r="2.6"/><circle cx="566.9" cy="220.3" r="2.6"/><circle cx="541.3" cy="261.2" r="2.6"/><circle cx="515.9" cy="164.6" r="2.6"/><circle cx="492.8" cy="255.8" r="2.6"/><circle cx="525.9" cy="157.6" r="2.6"/><circle cx="587.9" cy="220.6" r="2.6"/><circle cx="513.9" cy="212.8" r="2.6"/><circle cx="496.5" cy="208.3" r="2.6"/><circle cx="520.7" cy="255.3" r="2.6"/><circle cx="510.0" cy="217.4" r="2.6"/><circle cx="499.2" cy="244.2" r="2.6"/><circle cx="521.2" cy="222.6" r="2.6"/><circle cx="551.5" cy="216.5" r="2.6"/><circle cx="502.2" cy="166.1" r="2.6"/><circle cx="492.2" cy="232.1" r="2.6"/><circle cx="506.7" cy="236.9" r="2.6"/><circle cx="523.1" cy="191.5" r="2.6"/><circle cx="587.6" cy="188.8" r="2.6"/><circle cx="533.6" cy="248.3" r="2.6"/><circle cx="529.9" cy="238.7" r="2.6"/><circle cx="528.5" cy="179.0" r="2.6"/><circle cx="540.1" cy="216.0" r="2.6"/><circle cx="503.3" cy="210.1" r="2.6"/><circle cx="536.5" cy="238.3" r="2.6"/><circle cx="512.8" cy="182.0" r="2.6"/><circle cx="468.4" cy="223.2" r="2.6"/><circle cx="487.4" cy="161.3" r="2.6"/><circle cx="555.4" cy="193.4" r="2.6"/><circle cx="547.4" cy="200.5" r="2.6"/><circle cx="543.4" cy="258.7" r="2.6"/><circle cx="542.1" cy="190.9" r="2.6"/><circle cx="477.4" cy="183.8" r="2.6"/><circle cx="557.8" cy="256.7" r="2.6"/><circle cx="514.1" cy="219.0" r="2.6"/><circle cx="512.0" cy="197.3" r="2.6"/><circle cx="483.2" cy="216.4" r="2.6"/><circle cx="540.9" cy="186.9" r="2.6"/><circle cx="534.1" cy="216.9" r="2.6"/><circle cx="568.1" cy="219.0" r="2.6"/><circle cx="484.2" cy="222.8" r="2.6"/><circle cx="519.7" cy="233.6" r="2.6"/><circle cx="560.4" cy="237.0" r="2.6"/><circle cx="482.5" cy="239.2" r="2.6"/><circle cx="598.1" cy="208.6" r="2.6"/><circle cx="508.7" cy="240.2" r="2.6"/><circle cx="490.0" cy="214.5" r="2.6"/><circle cx="548.6" cy="173.6" r="2.6"/><circle cx="576.2" cy="201.0" r="2.6"/><circle cx="506.9" cy="236.2" r="2.6"/><circle cx="443.4" cy="241.1" r="2.6"/><circle cx="548.4" cy="219.9" r="2.6"/><circle cx="546.3" cy="251.3" r="2.6"/><circle cx="566.7" cy="200.2" r="2.6"/><circle cx="533.8" cy="197.0" r="2.6"/><circle cx="446.3" cy="226.7" r="2.6"/><circle cx="497.8" cy="153.1" r="2.6"/><circle cx="525.2" cy="225.1" r="2.6"/><circle cx="565.0" cy="242.2" r="2.6"/><circle cx="586.8" cy="231.3" r="2.6"/><circle cx="529.9" cy="237.9" r="2.6"/><circle cx="558.7" cy="234.9" r="2.6"/><circle cx="534.1" cy="245.2" r="2.6"/><circle cx="541.0" cy="203.6" r="2.6"/><circle cx="554.9" cy="199.6" r="2.6"/><circle cx="556.1" cy="178.5" r="2.6"/><circle cx="517.3" cy="246.1" r="2.6"/><circle cx="483.2" cy="188.3" r="2.6"/><circle cx="517.8" cy="176.7" r="2.6"/><circle cx="533.9" cy="240.9" r="2.6"/><circle cx="525.3" cy="238.6" r="2.6"/><circle cx="499.7" cy="181.7" r="2.6"/><circle cx="509.7" cy="222.0" r="2.6"/><circle cx="558.5" cy="209.0" r="2.6"/><circle cx="536.6" cy="226.3" r="2.6"/><circle cx="507.7" cy="204.3" r="2.6"/><circle cx="538.2" cy="191.0" r="2.6"/><circle cx="513.0" cy="198.7" r="2.6"/><circle cx="550.5" cy="206.8" r="2.6"/><circle cx="554.1" cy="178.0" r="2.6"/><circle cx="539.8" cy="207.0" r="2.6"/><circle cx="495.0" cy="199.2" r="2.6"/><circle cx="528.6" cy="219.1" r="2.6"/><circle cx="500.5" cy="191.6" r="2.6"/><circle cx="535.5" cy="195.8" r="2.6"/><circle cx="509.5" cy="206.4" r="2.6"/><circle cx="506.8" cy="229.4" r="2.6"/><circle cx="541.1" cy="202.3" r="2.6"/><circle cx="527.9" cy="234.1" r="2.6"/><circle cx="542.3" cy="243.2" r="2.6"/><circle cx="561.8" cy="220.2" r="2.6"/><circle cx="532.2" cy="185.0" r="2.6"/><circle cx="553.6" cy="249.6" r="2.6"/><circle cx="522.7" cy="198.0" r="2.6"/><circle cx="529.5" cy="210.9" r="2.6"/><circle cx="548.6" cy="206.8" r="2.6"/><circle cx="537.2" cy="202.0" r="2.6"/><circle cx="585.0" cy="194.3" r="2.6"/><circle cx="553.0" cy="221.6" r="2.6"/><circle cx="575.3" cy="215.2" r="2.6"/><circle cx="541.6" cy="212.4" r="2.6"/><circle cx="514.5" cy="169.4" r="2.6"/><circle cx="547.8" cy="213.8" r="2.6"/><circle cx="512.1" cy="151.1" r="2.6"/><circle cx="560.9" cy="189.0" r="2.6"/><circle cx="503.0" cy="168.9" r="2.6"/><circle cx="553.6" cy="217.8" r="2.6"/><circle cx="528.2" cy="259.9" r="2.6"/><circle cx="557.2" cy="243.3" r="2.6"/><circle cx="564.5" cy="223.1" r="2.6"/><circle cx="508.4" cy="197.9" r="2.6"/><circle cx="540.3" cy="244.4" r="2.6"/><circle cx="529.4" cy="190.6" r="2.6"/><circle cx="522.6" cy="251.1" r="2.6"/><circle cx="522.9" cy="239.2" r="2.6"/><circle cx="510.1" cy="208.0" r="2.6"/><circle cx="530.2" cy="215.9" r="2.6"/><circle cx="468.9" cy="198.6" r="2.6"/><circle cx="524.6" cy="222.0" r="2.6"/><circle cx="482.9" cy="259.2" r="2.6"/><circle cx="561.4" cy="233.9" r="2.6"/><circle cx="582.0" cy="239.9" r="2.6"/><circle cx="513.7" cy="183.6" r="2.6"/><circle cx="567.1" cy="195.7" r="2.6"/><circle cx="549.6" cy="213.4" r="2.6"/><circle cx="515.4" cy="215.7" r="2.6"/><circle cx="580.8" cy="187.5" r="2.6"/><circle cx="532.9" cy="199.6" r="2.6"/><circle cx="563.9" cy="172.8" r="2.6"/><circle cx="527.2" cy="211.8" r="2.6"/><circle cx="541.4" cy="170.1" r="2.6"/><circle cx="473.6" cy="183.2" r="2.6"/><circle cx="478.5" cy="242.8" r="2.6"/><circle cx="508.0" cy="213.8" r="2.6"/><circle cx="539.1" cy="198.1" r="2.6"/><circle cx="540.8" cy="222.9" r="2.6"/><circle cx="569.1" cy="191.6" r="2.6"/><circle cx="544.5" cy="151.8" r="2.6"/><circle cx="491.0" cy="239.0" r="2.6"/><circle cx="502.6" cy="174.6" r="2.6"/><circle cx="514.7" cy="204.4" r="2.6"/><circle cx="558.6" cy="245.3" r="2.6"/><circle cx="542.5" cy="228.8" r="2.6"/><circle cx="490.6" cy="217.9" r="2.6"/><circle cx="530.1" cy="221.8" r="2.6"/><circle cx="507.1" cy="180.0" r="2.6"/><circle cx="576.1" cy="192.3" r="2.6"/><circle cx="528.5" cy="241.9" r="2.6"/><circle cx="501.0" cy="243.5" r="2.6"/><circle cx="540.2" cy="181.3" r="2.6"/><circle cx="566.9" cy="210.2" r="2.6"/><circle cx="517.6" cy="203.9" r="2.6"/><circle cx="536.8" cy="191.1" r="2.6"/><circle cx="588.3" cy="230.5" r="2.6"/><circle cx="464.5" cy="256.0" r="2.6"/><circle cx="493.2" cy="216.6" r="2.6"/><circle cx="610.8" cy="230.9" r="2.6"/><circle cx="574.2" cy="220.5" r="2.6"/><circle cx="538.0" cy="240.8" r="2.6"/><circle cx="539.1" cy="196.6" r="2.6"/><circle cx="526.7" cy="235.0" r="2.6"/><circle cx="477.8" cy="214.8" r="2.6"/><circle cx="593.7" cy="196.4" r="2.6"/><circle cx="525.6" cy="176.8" r="2.6"/><circle cx="496.7" cy="167.0" r="2.6"/><circle cx="531.6" cy="235.0" r="2.6"/><circle cx="558.0" cy="193.6" r="2.6"/><circle cx="519.1" cy="202.8" r="2.6"/><circle cx="569.4" cy="166.1" r="2.6"/><circle cx="610.1" cy="217.5" r="2.6"/><circle cx="516.4" cy="196.2" r="2.6"/><circle cx="516.0" cy="177.3" r="2.6"/><circle cx="484.9" cy="215.7" r="2.6"/><circle cx="484.4" cy="162.5" r="2.6"/><circle cx="522.8" cy="175.6" r="2.6"/><circle cx="585.0" cy="246.2" r="2.6"/><circle cx="523.8" cy="187.3" r="2.6"/><circle cx="534.1" cy="213.6" r="2.6"/><circle cx="564.2" cy="181.3" r="2.6"/><circle cx="509.7" cy="213.6" r="2.6"/><circle cx="556.9" cy="202.9" r="2.6"/><circle cx="537.6" cy="243.9" r="2.6"/><circle cx="599.0" cy="216.5" r="2.6"/><circle cx="542.4" cy="210.5" r="2.6"/><circle cx="534.7" cy="204.8" r="2.6"/><circle cx="500.4" cy="197.8" r="2.6"/><circle cx="578.0" cy="197.0" r="2.6"/><circle cx="559.8" cy="194.5" r="2.6"/><circle cx="533.4" cy="153.5" r="2.6"/><circle cx="506.2" cy="197.5" r="2.6"/><circle cx="571.4" cy="200.4" r="2.6"/><circle cx="492.1" cy="242.9" r="2.6"/><circle cx="591.8" cy="238.9" r="2.6"/><circle cx="532.6" cy="192.6" r="2.6"/><circle cx="459.9" cy="212.7" r="2.6"/><circle cx="502.7" cy="217.5" r="2.6"/><circle cx="535.7" cy="204.4" r="2.6"/><circle cx="481.3" cy="261.3" r="2.6"/><circle cx="568.0" cy="228.8" r="2.6"/><circle cx="552.6" cy="248.3" r="2.6"/><circle cx="492.3" cy="190.2" r="2.6"/><circle cx="543.9" cy="192.0" r="2.6"/><circle cx="494.6" cy="218.7" r="2.6"/><circle cx="506.9" cy="181.9" r="2.6"/><circle cx="546.0" cy="241.7" r="2.6"/><circle cx="553.8" cy="214.0" r="2.6"/><circle cx="513.7" cy="174.7" r="2.6"/><circle cx="468.5" cy="177.5" r="2.6"/><circle cx="524.9" cy="214.4" r="2.6"/><circle cx="488.9" cy="227.1" r="2.6"/><circle cx="501.2" cy="207.4" r="2.6"/><circle cx="577.9" cy="181.7" r="2.6"/><circle cx="500.3" cy="182.4" r="2.6"/><circle cx="516.5" cy="225.5" r="2.6"/><circle cx="553.5" cy="218.8" r="2.6"/><circle cx="478.7" cy="170.4" r="2.6"/><circle cx="519.9" cy="186.8" r="2.6"/><circle cx="516.5" cy="181.1" r="2.6"/><circle cx="528.1" cy="193.2" r="2.6"/><circle cx="556.6" cy="198.7" r="2.6"/><circle cx="537.0" cy="197.4" r="2.6"/><circle cx="469.8" cy="217.8" r="2.6"/><circle cx="560.8" cy="246.7" r="2.6"/><circle cx="533.9" cy="212.3" r="2.6"/><circle cx="559.7" cy="199.0" r="2.6"/><circle cx="502.1" cy="206.8" r="2.6"/><circle cx="520.8" cy="212.2" r="2.6"/><circle cx="583.7" cy="156.3" r="2.6"/><circle cx="506.9" cy="249.3" r="2.6"/><circle cx="540.3" cy="201.3" r="2.6"/><circle cx="533.6" cy="228.7" r="2.6"/><circle cx="558.7" cy="155.7" r="2.6"/><circle cx="540.8" cy="216.4" r="2.6"/><circle cx="578.3" cy="218.8" r="2.6"/><circle cx="518.7" cy="199.4" r="2.6"/><circle cx="528.3" cy="193.2" r="2.6"/><circle cx="544.4" cy="196.6" r="2.6"/><circle cx="481.1" cy="154.2" r="2.6"/><circle cx="554.4" cy="200.0" r="2.6"/><circle cx="560.8" cy="212.3" r="2.6"/><circle cx="472.6" cy="204.9" r="2.6"/><circle cx="529.1" cy="203.5" r="2.6"/><circle cx="496.2" cy="166.8" r="2.6"/><circle cx="542.1" cy="248.9" r="2.6"/><circle cx="485.7" cy="200.8" r="2.6"/><circle cx="487.8" cy="195.8" r="2.6"/><circle cx="545.0" cy="227.4" r="2.6"/><circle cx="458.2" cy="249.8" r="2.6"/><circle cx="546.2" cy="225.3" r="2.6"/><circle cx="603.8" cy="223.0" r="2.6"/><circle cx="547.1" cy="188.1" r="2.6"/><circle cx="536.0" cy="199.6" r="2.6"/><circle cx="571.2" cy="213.7" r="2.6"/><circle cx="545.4" cy="220.4" r="2.6"/><circle cx="609.5" cy="203.9" r="2.6"/><circle cx="513.7" cy="244.3" r="2.6"/><circle cx="533.9" cy="223.0" r="2.6"/><circle cx="492.1" cy="217.8" r="2.6"/><circle cx="563.7" cy="175.9" r="2.6"/><circle cx="512.0" cy="176.3" r="2.6"/><circle cx="508.7" cy="190.0" r="2.6"/><circle cx="499.4" cy="176.7" r="2.6"/><circle cx="579.5" cy="254.4" r="2.6"/><circle cx="529.8" cy="193.6" r="2.6"/><circle cx="469.9" cy="209.7" r="2.6"/><circle cx="502.3" cy="171.8" r="2.6"/><circle cx="490.3" cy="199.1" r="2.6"/><circle cx="455.4" cy="221.8" r="2.6"/><circle cx="579.1" cy="212.6" r="2.6"/><circle cx="482.5" cy="193.9" r="2.6"/><circle cx="568.9" cy="195.6" r="2.6"/><circle cx="570.5" cy="253.5" r="2.6"/><circle cx="602.4" cy="187.2" r="2.6"/><circle cx="514.4" cy="193.3" r="2.6"/><circle cx="456.2" cy="228.8" r="2.6"/><circle cx="462.1" cy="183.2" r="2.6"/><circle cx="523.5" cy="238.0" r="2.6"/><circle cx="518.0" cy="174.4" r="2.6"/><circle cx="502.4" cy="191.6" r="2.6"/><circle cx="486.9" cy="261.1" r="2.6"/><circle cx="513.6" cy="218.3" r="2.6"/><circle cx="539.2" cy="180.0" r="2.6"/><circle cx="516.4" cy="220.7" r="2.6"/><circle cx="561.6" cy="196.0" r="2.6"/><circle cx="530.3" cy="202.0" r="2.6"/><circle cx="448.2" cy="226.3" r="2.6"/><circle cx="470.9" cy="220.3" r="2.6"/><circle cx="566.8" cy="261.6" r="2.6"/><circle cx="567.6" cy="226.8" r="2.6"/><circle cx="524.2" cy="223.8" r="2.6"/><circle cx="559.5" cy="230.2" r="2.6"/><circle cx="452.4" cy="199.3" r="2.6"/><circle cx="526.5" cy="189.8" r="2.6"/><circle cx="555.4" cy="247.0" r="2.6"/><circle cx="540.1" cy="205.6" r="2.6"/><circle cx="529.4" cy="206.3" r="2.6"/><circle cx="544.3" cy="226.6" r="2.6"/><circle cx="526.4" cy="178.9" r="2.6"/><circle cx="491.5" cy="211.8" r="2.6"/><circle cx="493.3" cy="242.4" r="2.6"/><circle cx="516.2" cy="203.9" r="2.6"/><circle cx="590.6" cy="215.6" r="2.6"/><circle cx="568.1" cy="192.6" r="2.6"/><circle cx="537.1" cy="207.7" r="2.6"/><circle cx="492.3" cy="205.3" r="2.6"/><circle cx="588.8" cy="245.2" r="2.6"/><circle cx="512.6" cy="181.2" r="2.6"/><circle cx="463.0" cy="241.5" r="2.6"/><circle cx="543.6" cy="179.8" r="2.6"/><circle cx="578.9" cy="185.9" r="2.6"/><circle cx="482.6" cy="215.4" r="2.6"/><circle cx="556.2" cy="197.9" r="2.6"/><circle cx="457.9" cy="197.4" r="2.6"/><circle cx="501.7" cy="215.6" r="2.6"/><circle cx="588.4" cy="214.6" r="2.6"/><circle cx="506.8" cy="213.1" r="2.6"/><circle cx="564.0" cy="181.0" r="2.6"/><circle cx="506.0" cy="229.3" r="2.6"/><circle cx="571.5" cy="249.1" r="2.6"/><circle cx="536.1" cy="198.9" r="2.6"/><circle cx="501.9" cy="198.4" r="2.6"/><circle cx="547.3" cy="152.9" r="2.6"/><circle cx="550.1" cy="215.4" r="2.6"/><circle cx="565.3" cy="225.6" r="2.6"/><circle cx="538.1" cy="190.0" r="2.6"/><circle cx="576.1" cy="200.8" r="2.6"/><circle cx="476.2" cy="169.1" r="2.6"/><circle cx="538.8" cy="218.6" r="2.6"/><circle cx="501.2" cy="191.5" r="2.6"/><circle cx="545.0" cy="188.2" r="2.6"/><circle cx="527.3" cy="161.7" r="2.6"/><circle cx="522.2" cy="196.7" r="2.6"/><circle cx="539.9" cy="176.4" r="2.6"/><circle cx="505.7" cy="218.7" r="2.6"/><circle cx="523.9" cy="230.0" r="2.6"/><circle cx="507.1" cy="246.9" r="2.6"/><circle cx="561.0" cy="163.1" r="2.6"/><circle cx="494.6" cy="185.5" r="2.6"/><circle cx="488.1" cy="234.6" r="2.6"/><circle cx="520.0" cy="205.7" r="2.6"/><circle cx="481.8" cy="206.9" r="2.6"/><circle cx="521.5" cy="229.7" r="2.6"/><circle cx="508.2" cy="207.3" r="2.6"/><circle cx="525.0" cy="237.1" r="2.6"/><circle cx="526.6" cy="250.3" r="2.6"/><circle cx="568.9" cy="185.6" r="2.6"/><circle cx="558.1" cy="238.0" r="2.6"/><circle cx="458.0" cy="224.6" r="2.6"/><circle cx="490.0" cy="197.5" r="2.6"/><circle cx="470.1" cy="238.2" r="2.6"/><circle cx="537.2" cy="196.2" r="2.6"/><circle cx="535.6" cy="248.7" r="2.6"/><circle cx="568.1" cy="235.2" r="2.6"/><circle cx="605.0" cy="213.7" r="2.6"/><circle cx="531.8" cy="235.2" r="2.6"/><circle cx="589.9" cy="206.2" r="2.6"/><circle cx="528.9" cy="238.2" r="2.6"/><circle cx="483.0" cy="204.1" r="2.6"/><circle cx="532.3" cy="161.3" r="2.6"/><circle cx="497.2" cy="221.2" r="2.6"/><circle cx="569.9" cy="184.3" r="2.6"/><circle cx="506.1" cy="164.2" r="2.6"/><circle cx="550.2" cy="181.9" r="2.6"/><circle cx="545.3" cy="179.4" r="2.6"/><circle cx="516.0" cy="216.2" r="2.6"/><circle cx="573.7" cy="197.4" r="2.6"/><circle cx="545.9" cy="174.2" r="2.6"/><circle cx="541.0" cy="197.0" r="2.6"/><circle cx="447.6" cy="225.9" r="2.6"/><circle cx="563.5" cy="236.9" r="2.6"/><circle cx="520.9" cy="202.5" r="2.6"/><circle cx="526.7" cy="182.8" r="2.6"/><circle cx="550.1" cy="215.0" r="2.6"/><circle cx="573.6" cy="220.8" r="2.6"/><circle cx="504.8" cy="199.6" r="2.6"/><circle cx="556.2" cy="214.1" r="2.6"/><circle cx="490.8" cy="225.5" r="2.6"/><circle cx="540.7" cy="188.4" r="2.6"/><circle cx="599.9" cy="214.4" r="2.6"/><circle cx="581.0" cy="181.3" r="2.6"/><circle cx="532.3" cy="231.6" r="2.6"/><circle cx="502.0" cy="162.7" r="2.6"/><circle cx="561.1" cy="169.7" r="2.6"/><circle cx="526.6" cy="172.6" r="2.6"/><circle cx="478.2" cy="164.2" r="2.6"/><circle cx="530.7" cy="246.2" r="2.6"/><circle cx="516.6" cy="239.7" r="2.6"/><circle cx="542.1" cy="232.0" r="2.6"/><circle cx="483.2" cy="220.7" r="2.6"/><circle cx="523.2" cy="203.2" r="2.6"/><circle cx="558.7" cy="170.4" r="2.6"/><circle cx="547.8" cy="158.6" r="2.6"/><circle cx="567.9" cy="250.4" r="2.6"/><circle cx="524.2" cy="202.7" r="2.6"/><circle cx="472.7" cy="227.3" r="2.6"/><circle cx="554.9" cy="219.4" r="2.6"/><circle cx="529.3" cy="245.1" r="2.6"/><circle cx="530.6" cy="227.1" r="2.6"/><circle cx="477.3" cy="222.0" r="2.6"/><circle cx="514.1" cy="220.6" r="2.6"/><circle cx="567.3" cy="176.4" r="2.6"/><circle cx="547.9" cy="220.7" r="2.6"/><circle cx="548.2" cy="208.8" r="2.6"/><circle cx="540.6" cy="239.6" r="2.6"/><circle cx="509.2" cy="225.0" r="2.6"/><circle cx="531.5" cy="211.3" r="2.6"/><circle cx="520.5" cy="162.2" r="2.6"/><circle cx="536.9" cy="202.4" r="2.6"/><circle cx="498.2" cy="212.6" r="2.6"/><circle cx="549.7" cy="212.0" r="2.6"/><circle cx="544.5" cy="238.6" r="2.6"/><circle cx="546.4" cy="241.1" r="2.6"/><circle cx="515.3" cy="233.4" r="2.6"/><circle cx="538.9" cy="175.7" r="2.6"/><circle cx="543.2" cy="236.6" r="2.6"/><circle cx="537.2" cy="177.4" r="2.6"/><circle cx="559.8" cy="194.1" r="2.6"/><circle cx="488.9" cy="226.7" r="2.6"/><circle cx="506.2" cy="224.2" r="2.6"/><circle cx="541.0" cy="208.3" r="2.6"/><circle cx="518.7" cy="192.0" r="2.6"/><circle cx="504.8" cy="219.7" r="2.6"/><circle cx="536.1" cy="251.5" r="2.6"/><circle cx="499.4" cy="252.6" r="2.6"/><circle cx="492.1" cy="213.8" r="2.6"/><circle cx="527.2" cy="198.9" r="2.6"/><circle cx="544.7" cy="244.6" r="2.6"/><circle cx="603.3" cy="167.7" r="2.6"/><circle cx="485.5" cy="230.8" r="2.6"/><circle cx="513.7" cy="203.3" r="2.6"/><circle cx="555.5" cy="209.5" r="2.6"/><circle cx="564.7" cy="184.0" r="2.6"/><circle cx="503.5" cy="206.4" r="2.6"/><circle cx="567.6" cy="224.1" r="2.6"/><circle cx="575.6" cy="206.8" r="2.6"/><circle cx="592.5" cy="208.0" r="2.6"/><circle cx="589.0" cy="258.9" r="2.6"/><circle cx="587.2" cy="195.6" r="2.6"/><circle cx="517.6" cy="176.3" r="2.6"/><circle cx="522.0" cy="184.2" r="2.6"/><circle cx="568.4" cy="177.1" r="2.6"/><circle cx="538.0" cy="197.3" r="2.6"/><circle cx="530.7" cy="247.6" r="2.6"/><circle cx="537.6" cy="246.2" r="2.6"/><circle cx="521.3" cy="218.9" r="2.6"/><circle cx="511.0" cy="242.5" r="2.6"/><circle cx="536.4" cy="210.2" r="2.6"/><circle cx="584.7" cy="190.0" r="2.6"/><circle cx="568.2" cy="224.0" r="2.6"/><circle cx="520.2" cy="248.1" r="2.6"/><circle cx="498.9" cy="187.4" r="2.6"/><circle cx="524.7" cy="213.9" r="2.6"/><circle cx="510.7" cy="161.6" r="2.6"/><circle cx="530.0" cy="174.3" r="2.6"/><circle cx="530.7" cy="180.2" r="2.6"/><circle cx="495.1" cy="251.0" r="2.6"/><circle cx="574.3" cy="218.9" r="2.6"/><circle cx="542.4" cy="182.5" r="2.6"/><circle cx="558.7" cy="201.1" r="2.6"/><circle cx="486.7" cy="231.1" r="2.6"/><circle cx="533.5" cy="189.8" r="2.6"/><circle cx="551.9" cy="198.1" r="2.6"/><circle cx="502.7" cy="209.6" r="2.6"/><circle cx="569.1" cy="236.2" r="2.6"/><circle cx="510.3" cy="181.5" r="2.6"/><circle cx="592.6" cy="196.8" r="2.6"/><circle cx="532.5" cy="239.0" r="2.6"/><circle cx="527.5" cy="233.9" r="2.6"/><circle cx="537.5" cy="187.4" r="2.6"/><circle cx="549.4" cy="169.3" r="2.6"/><circle cx="493.4" cy="248.5" r="2.6"/><circle cx="584.3" cy="177.2" r="2.6"/><circle cx="495.1" cy="205.3" r="2.6"/><circle cx="491.3" cy="210.0" r="2.6"/><circle cx="544.1" cy="179.8" r="2.6"/><circle cx="495.2" cy="248.5" r="2.6"/><circle cx="553.9" cy="219.8" r="2.6"/><circle cx="585.6" cy="244.7" r="2.6"/><circle cx="575.3" cy="168.4" r="2.6"/><circle cx="548.0" cy="218.8" r="2.6"/><circle cx="455.1" cy="251.6" r="2.6"/><circle cx="566.3" cy="227.9" r="2.6"/><circle cx="548.6" cy="192.3" r="2.6"/><circle cx="551.5" cy="238.0" r="2.6"/><circle cx="515.6" cy="178.6" r="2.6"/><circle cx="558.7" cy="219.8" r="2.6"/><circle cx="516.7" cy="181.4" r="2.6"/><circle cx="563.1" cy="213.2" r="2.6"/><circle cx="601.1" cy="176.1" r="2.6"/><circle cx="533.3" cy="187.4" r="2.6"/><circle cx="557.8" cy="218.0" r="2.6"/><circle cx="560.3" cy="225.7" r="2.6"/><circle cx="523.4" cy="188.9" r="2.6"/><circle cx="484.7" cy="219.9" r="2.6"/><circle cx="495.5" cy="187.4" r="2.6"/><circle cx="510.4" cy="152.8" r="2.6"/><circle cx="591.0" cy="230.4" r="2.6"/><circle cx="538.5" cy="220.2" r="2.6"/><circle cx="532.2" cy="188.4" r="2.6"/><circle cx="602.7" cy="248.0" r="2.6"/><circle cx="514.3" cy="214.9" r="2.6"/><circle cx="520.5" cy="204.7" r="2.6"/><circle cx="557.1" cy="223.2" r="2.6"/><circle cx="510.9" cy="166.8" r="2.6"/><circle cx="596.6" cy="168.1" r="2.6"/><circle cx="503.8" cy="192.4" r="2.6"/><circle cx="503.1" cy="243.8" r="2.6"/><circle cx="532.1" cy="193.4" r="2.6"/><circle cx="524.6" cy="212.6" r="2.6"/><circle cx="556.6" cy="230.0" r="2.6"/><circle cx="548.8" cy="185.2" r="2.6"/><circle cx="557.5" cy="191.6" r="2.6"/><circle cx="494.4" cy="217.9" r="2.6"/><circle cx="516.1" cy="187.2" r="2.6"/><circle cx="465.8" cy="204.8" r="2.6"/><circle cx="471.5" cy="189.1" r="2.6"/><circle cx="512.9" cy="207.7" r="2.6"/><circle cx="568.0" cy="156.5" r="2.6"/><circle cx="494.8" cy="205.4" r="2.6"/><circle cx="458.3" cy="215.3" r="2.6"/><circle cx="506.4" cy="188.6" r="2.6"/><circle cx="528.4" cy="206.0" r="2.6"/><circle cx="490.1" cy="219.3" r="2.6"/><circle cx="490.1" cy="208.5" r="2.6"/><circle cx="472.2" cy="200.9" r="2.6"/><circle cx="590.1" cy="168.3" r="2.6"/><circle cx="563.2" cy="160.1" r="2.6"/><circle cx="531.2" cy="196.9" r="2.6"/><circle cx="461.2" cy="224.4" r="2.6"/><circle cx="576.6" cy="261.9" r="2.6"/><circle cx="544.8" cy="210.7" r="2.6"/><circle cx="519.0" cy="199.2" r="2.6"/><circle cx="533.6" cy="243.5" r="2.6"/><circle cx="589.9" cy="209.7" r="2.6"/><circle cx="566.5" cy="237.1" r="2.6"/><circle cx="602.9" cy="177.6" r="2.6"/><circle cx="545.9" cy="202.3" r="2.6"/><circle cx="547.3" cy="231.5" r="2.6"/><circle cx="527.4" cy="215.8" r="2.6"/><circle cx="547.1" cy="161.6" r="2.6"/><circle cx="576.8" cy="200.7" r="2.6"/><circle cx="556.9" cy="217.7" r="2.6"/><circle cx="514.4" cy="258.7" r="2.6"/><circle cx="484.5" cy="245.7" r="2.6"/><circle cx="530.1" cy="214.4" r="2.6"/><circle cx="549.2" cy="173.4" r="2.6"/><circle cx="558.6" cy="213.5" r="2.6"/><circle cx="515.0" cy="217.9" r="2.6"/><circle cx="556.0" cy="237.1" r="2.6"/><circle cx="475.6" cy="215.8" r="2.6"/><circle cx="572.8" cy="171.4" r="2.6"/><circle cx="526.7" cy="187.1" r="2.6"/><circle cx="574.1" cy="152.1" r="2.6"/><circle cx="496.9" cy="197.7" r="2.6"/><circle cx="473.2" cy="215.6" r="2.6"/><circle cx="517.8" cy="183.8" r="2.6"/><circle cx="539.0" cy="263.0" r="2.6"/><circle cx="527.9" cy="197.8" r="2.6"/><circle cx="588.1" cy="231.4" r="2.6"/><circle cx="499.8" cy="227.1" r="2.6"/><circle cx="571.6" cy="217.9" r="2.6"/><circle cx="535.9" cy="195.4" r="2.6"/><circle cx="501.3" cy="175.5" r="2.6"/><circle cx="470.8" cy="152.7" r="2.6"/><circle cx="507.2" cy="237.2" r="2.6"/><circle cx="504.4" cy="245.1" r="2.6"/><circle cx="499.0" cy="233.9" r="2.6"/><circle cx="488.0" cy="214.6" r="2.6"/><circle cx="544.5" cy="227.1" r="2.6"/><circle cx="539.4" cy="234.9" r="2.6"/><circle cx="540.9" cy="219.2" r="2.6"/><circle cx="490.9" cy="206.2" r="2.6"/><circle cx="526.0" cy="229.7" r="2.6"/><circle cx="530.6" cy="192.9" r="2.6"/><circle cx="485.6" cy="224.8" r="2.6"/><circle cx="556.2" cy="209.3" r="2.6"/><circle cx="484.6" cy="198.2" r="2.6"/><circle cx="518.3" cy="165.2" r="2.6"/><circle cx="554.3" cy="252.2" r="2.6"/><circle cx="573.5" cy="209.1" r="2.6"/><circle cx="520.6" cy="208.8" r="2.6"/><circle cx="540.6" cy="235.8" r="2.6"/><circle cx="517.7" cy="167.5" r="2.6"/><circle cx="493.5" cy="227.9" r="2.6"/><circle cx="561.7" cy="238.5" r="2.6"/><circle cx="524.5" cy="200.0" r="2.6"/><circle cx="497.7" cy="219.0" r="2.6"/><circle cx="497.7" cy="216.0" r="2.6"/><circle cx="542.9" cy="209.0" r="2.6"/><circle cx="541.5" cy="197.8" r="2.6"/><circle cx="562.3" cy="242.4" r="2.6"/><circle cx="536.6" cy="160.6" r="2.6"/><circle cx="523.1" cy="217.7" r="2.6"/><circle cx="532.4" cy="231.8" r="2.6"/><circle cx="553.5" cy="209.7" r="2.6"/><circle cx="525.7" cy="186.5" r="2.6"/><circle cx="578.2" cy="253.2" r="2.6"/><circle cx="513.1" cy="217.9" r="2.6"/><circle cx="478.4" cy="188.4" r="2.6"/><circle cx="515.3" cy="250.3" r="2.6"/><circle cx="562.1" cy="213.2" r="2.6"/><circle cx="525.5" cy="194.4" r="2.6"/><circle cx="561.3" cy="159.0" r="2.6"/><circle cx="584.6" cy="180.5" r="2.6"/><circle cx="469.6" cy="170.8" r="2.6"/><circle cx="535.8" cy="256.7" r="2.6"/><circle cx="538.6" cy="217.0" r="2.6"/><circle cx="528.6" cy="179.7" r="2.6"/><circle cx="480.6" cy="189.5" r="2.6"/><circle cx="577.9" cy="244.5" r="2.6"/><circle cx="585.6" cy="230.2" r="2.6"/><circle cx="503.9" cy="180.4" r="2.6"/><circle cx="507.6" cy="188.2" r="2.6"/><circle cx="511.4" cy="224.2" r="2.6"/><circle cx="532.6" cy="209.7" r="2.6"/><circle cx="505.9" cy="238.2" r="2.6"/><circle cx="549.1" cy="171.4" r="2.6"/><circle cx="570.4" cy="236.8" r="2.6"/><circle cx="587.2" cy="256.0" r="2.6"/><circle cx="568.8" cy="159.2" r="2.6"/><circle cx="534.5" cy="240.4" r="2.6"/><circle cx="547.3" cy="165.9" r="2.6"/><circle cx="548.0" cy="158.7" r="2.6"/><circle cx="468.1" cy="235.6" r="2.6"/><circle cx="512.0" cy="188.7" r="2.6"/><circle cx="578.9" cy="235.3" r="2.6"/><circle cx="496.7" cy="181.8" r="2.6"/><circle cx="481.6" cy="191.8" r="2.6"/><circle cx="500.9" cy="212.1" r="2.6"/><circle cx="611.5" cy="217.7" r="2.6"/><circle cx="533.9" cy="234.5" r="2.6"/><circle cx="553.6" cy="162.1" r="2.6"/><circle cx="556.7" cy="250.0" r="2.6"/><circle cx="546.1" cy="161.1" r="2.6"/><circle cx="495.5" cy="213.8" r="2.6"/><circle cx="496.7" cy="227.4" r="2.6"/><circle cx="494.1" cy="251.2" r="2.6"/><circle cx="550.7" cy="211.0" r="2.6"/><circle cx="448.7" cy="241.8" r="2.6"/><circle cx="504.3" cy="243.6" r="2.6"/><circle cx="538.1" cy="215.7" r="2.6"/><circle cx="546.4" cy="251.3" r="2.6"/><circle cx="503.6" cy="223.0" r="2.6"/><circle cx="517.7" cy="220.4" r="2.6"/><circle cx="502.9" cy="213.2" r="2.6"/><circle cx="595.3" cy="232.8" r="2.6"/><circle cx="468.7" cy="200.6" r="2.6"/><circle cx="497.2" cy="184.3" r="2.6"/><circle cx="572.3" cy="157.2" r="2.6"/><circle cx="537.9" cy="261.7" r="2.6"/><circle cx="593.8" cy="180.7" r="2.6"/><circle cx="581.6" cy="206.4" r="2.6"/><circle cx="518.8" cy="208.6" r="2.6"/><circle cx="461.5" cy="178.7" r="2.6"/><circle cx="508.5" cy="228.4" r="2.6"/><circle cx="546.4" cy="236.2" r="2.6"/><circle cx="563.2" cy="228.4" r="2.6"/><circle cx="558.7" cy="199.2" r="2.6"/><circle cx="534.7" cy="224.7" r="2.6"/><circle cx="459.1" cy="226.3" r="2.6"/><circle cx="502.2" cy="224.8" r="2.6"/><circle cx="484.9" cy="230.3" r="2.6"/><circle cx="515.0" cy="180.8" r="2.6"/><circle cx="557.6" cy="209.2" r="2.6"/><circle cx="542.8" cy="154.9" r="2.6"/><circle cx="539.4" cy="191.4" r="2.6"/><circle cx="534.5" cy="228.2" r="2.6"/><circle cx="574.1" cy="214.3" r="2.6"/><circle cx="589.3" cy="243.7" r="2.6"/><circle cx="550.1" cy="156.8" r="2.6"/><circle cx="508.8" cy="198.2" r="2.6"/><circle cx="589.6" cy="195.6" r="2.6"/><circle cx="501.9" cy="219.3" r="2.6"/><circle cx="544.9" cy="227.3" r="2.6"/><circle cx="516.8" cy="204.9" r="2.6"/><circle cx="485.1" cy="157.2" r="2.6"/><circle cx="510.0" cy="209.4" r="2.6"/><circle cx="536.9" cy="164.9" r="2.6"/><circle cx="604.1" cy="186.1" r="2.6"/><circle cx="480.8" cy="249.5" r="2.6"/><circle cx="523.4" cy="200.1" r="2.6"/><circle cx="557.5" cy="170.9" r="2.6"/><circle cx="550.5" cy="207.0" r="2.6"/><circle cx="577.5" cy="256.0" r="2.6"/><circle cx="458.5" cy="230.9" r="2.6"/><circle cx="516.4" cy="247.0" r="2.6"/><circle cx="524.6" cy="206.3" r="2.6"/><circle cx="556.8" cy="196.8" r="2.6"/><circle cx="513.3" cy="205.6" r="2.6"/><circle cx="581.7" cy="216.9" r="2.6"/><circle cx="561.5" cy="215.8" r="2.6"/><circle cx="580.8" cy="169.8" r="2.6"/><circle cx="585.1" cy="244.9" r="2.6"/><circle cx="488.5" cy="186.4" r="2.6"/><circle cx="553.4" cy="194.5" r="2.6"/><circle cx="476.8" cy="184.3" r="2.6"/><circle cx="607.0" cy="171.6" r="2.6"/><circle cx="538.0" cy="152.1" r="2.6"/><circle cx="473.8" cy="200.4" r="2.6"/><circle cx="513.2" cy="152.6" r="2.6"/><circle cx="594.0" cy="168.7" r="2.6"/><circle cx="520.7" cy="215.5" r="2.6"/><circle cx="563.4" cy="219.2" r="2.6"/><circle cx="559.3" cy="199.4" r="2.6"/><circle cx="563.0" cy="205.1" r="2.6"/><circle cx="481.1" cy="254.2" r="2.6"/><circle cx="558.9" cy="253.7" r="2.6"/><circle cx="510.3" cy="193.7" r="2.6"/><circle cx="559.1" cy="176.9" r="2.6"/><circle cx="550.1" cy="160.5" r="2.6"/><circle cx="510.6" cy="172.4" r="2.6"/><circle cx="480.5" cy="222.0" r="2.6"/><circle cx="548.8" cy="189.6" r="2.6"/><circle cx="522.2" cy="229.4" r="2.6"/><circle cx="457.0" cy="158.5" r="2.6"/><circle cx="462.7" cy="258.6" r="2.6"/><circle cx="468.9" cy="217.9" r="2.6"/><circle cx="521.8" cy="228.1" r="2.6"/><circle cx="481.9" cy="214.0" r="2.6"/><circle cx="477.3" cy="199.1" r="2.6"/><circle cx="589.7" cy="239.3" r="2.6"/><circle cx="540.4" cy="225.4" r="2.6"/><circle cx="516.6" cy="251.2" r="2.6"/><circle cx="534.8" cy="210.2" r="2.6"/><circle cx="490.4" cy="174.5" r="2.6"/><circle cx="499.8" cy="226.5" r="2.6"/><circle cx="486.5" cy="194.4" r="2.6"/><circle cx="579.4" cy="213.0" r="2.6"/><circle cx="540.4" cy="235.0" r="2.6"/><circle cx="519.8" cy="250.5" r="2.6"/><circle cx="509.3" cy="224.8" r="2.6"/><circle cx="515.3" cy="206.3" r="2.6"/><circle cx="541.8" cy="196.7" r="2.6"/><circle cx="499.6" cy="184.4" r="2.6"/><circle cx="524.3" cy="234.8" r="2.6"/><circle cx="528.1" cy="250.5" r="2.6"/><circle cx="515.9" cy="156.3" r="2.6"/><circle cx="578.2" cy="190.8" r="2.6"/><circle cx="536.5" cy="200.9" r="2.6"/><circle cx="486.1" cy="204.3" r="2.6"/><circle cx="503.9" cy="229.0" r="2.6"/><circle cx="593.0" cy="232.7" r="2.6"/><circle cx="534.3" cy="206.9" r="2.6"/><circle cx="570.5" cy="217.3" r="2.6"/><circle cx="551.2" cy="197.5" r="2.6"/><circle cx="524.8" cy="227.8" r="2.6"/><circle cx="491.9" cy="176.0" r="2.6"/><circle cx="498.7" cy="173.2" r="2.6"/><circle cx="596.8" cy="227.0" r="2.6"/><circle cx="494.9" cy="240.8" r="2.6"/><circle cx="512.1" cy="168.0" r="2.6"/><circle cx="502.0" cy="242.7" r="2.6"/><circle cx="468.2" cy="206.4" r="2.6"/><circle cx="549.3" cy="162.3" r="2.6"/><circle cx="542.5" cy="210.5" r="2.6"/><circle cx="593.8" cy="181.0" r="2.6"/><circle cx="519.5" cy="215.2" r="2.6"/><circle cx="528.9" cy="212.2" r="2.6"/><circle cx="551.3" cy="230.8" r="2.6"/><circle cx="605.0" cy="239.9" r="2.6"/><circle cx="557.7" cy="185.5" r="2.6"/><circle cx="569.4" cy="166.6" r="2.6"/><circle cx="544.6" cy="202.5" r="2.6"/><circle cx="588.9" cy="168.4" r="2.6"/><circle cx="532.8" cy="182.0" r="2.6"/><circle cx="486.3" cy="196.3" r="2.6"/><circle cx="452.6" cy="170.3" r="2.6"/><circle cx="508.7" cy="179.6" r="2.6"/><circle cx="550.8" cy="227.1" r="2.6"/><circle cx="565.8" cy="156.9" r="2.6"/><circle cx="548.5" cy="236.4" r="2.6"/><circle cx="523.4" cy="196.9" r="2.6"/><circle cx="561.3" cy="233.4" r="2.6"/><circle cx="519.1" cy="193.2" r="2.6"/><circle cx="565.5" cy="180.5" r="2.6"/><circle cx="499.2" cy="236.0" r="2.6"/><circle cx="493.6" cy="209.9" r="2.6"/><circle cx="557.8" cy="155.6" r="2.6"/><circle cx="571.7" cy="233.6" r="2.6"/><circle cx="539.2" cy="191.2" r="2.6"/><circle cx="481.3" cy="251.1" r="2.6"/><circle cx="515.6" cy="216.0" r="2.6"/><circle cx="554.4" cy="211.8" r="2.6"/><circle cx="549.1" cy="259.8" r="2.6"/><circle cx="598.9" cy="181.6" r="2.6"/><circle cx="527.6" cy="206.7" r="2.6"/><circle cx="572.6" cy="199.3" r="2.6"/><circle cx="560.3" cy="225.6" r="2.6"/><circle cx="510.4" cy="158.4" r="2.6"/><circle cx="579.1" cy="257.8" r="2.6"/><circle cx="525.5" cy="229.1" r="2.6"/><circle cx="512.8" cy="247.1" r="2.6"/><circle cx="482.9" cy="205.1" r="2.6"/><circle cx="523.5" cy="190.0" r="2.6"/><circle cx="563.5" cy="225.0" r="2.6"/><circle cx="474.7" cy="212.6" r="2.6"/><circle cx="520.6" cy="194.5" r="2.6"/><circle cx="496.2" cy="158.3" r="2.6"/><circle cx="550.2" cy="179.0" r="2.6"/><circle cx="547.2" cy="196.6" r="2.6"/><circle cx="496.0" cy="213.6" r="2.6"/><circle cx="506.1" cy="214.5" r="2.6"/><circle cx="519.7" cy="184.0" r="2.6"/><circle cx="544.9" cy="217.0" r="2.6"/><circle cx="467.0" cy="178.8" r="2.6"/><circle cx="505.7" cy="219.9" r="2.6"/><circle cx="550.6" cy="209.7" r="2.6"/><circle cx="536.8" cy="205.0" r="2.6"/><circle cx="461.7" cy="186.5" r="2.6"/><circle cx="525.9" cy="184.4" r="2.6"/><circle cx="536.8" cy="221.3" r="2.6"/><circle cx="588.5" cy="204.4" r="2.6"/><circle cx="572.2" cy="189.4" r="2.6"/><circle cx="564.2" cy="176.1" r="2.6"/><circle cx="557.3" cy="236.9" r="2.6"/><circle cx="524.4" cy="166.4" r="2.6"/><circle cx="528.2" cy="219.5" r="2.6"/><circle cx="534.6" cy="179.2" r="2.6"/><circle cx="501.5" cy="210.3" r="2.6"/><circle cx="516.1" cy="229.4" r="2.6"/><circle cx="561.8" cy="225.7" r="2.6"/><circle cx="535.0" cy="197.0" r="2.6"/><circle cx="550.9" cy="193.9" r="2.6"/><circle cx="561.7" cy="231.1" r="2.6"/><circle cx="441.1" cy="181.8" r="2.6"/><circle cx="596.2" cy="220.4" r="2.6"/><circle cx="534.3" cy="181.8" r="2.6"/><circle cx="502.6" cy="210.2" r="2.6"/><circle cx="517.0" cy="191.8" r="2.6"/><circle cx="535.8" cy="157.8" r="2.6"/><circle cx="499.0" cy="229.8" r="2.6"/><circle cx="480.1" cy="201.8" r="2.6"/><circle cx="528.9" cy="215.5" r="2.6"/><circle cx="555.9" cy="238.3" r="2.6"/><circle cx="533.7" cy="238.3" r="2.6"/><circle cx="572.9" cy="204.3" r="2.6"/><circle cx="497.6" cy="198.3" r="2.6"/><circle cx="573.4" cy="185.9" r="2.6"/><circle cx="530.3" cy="156.8" r="2.6"/><circle cx="500.8" cy="214.0" r="2.6"/><circle cx="551.5" cy="239.5" r="2.6"/><circle cx="559.1" cy="196.7" r="2.6"/><circle cx="570.7" cy="198.7" r="2.6"/><circle cx="608.8" cy="249.5" r="2.6"/><circle cx="519.4" cy="224.1" r="2.6"/><circle cx="533.9" cy="188.5" r="2.6"/><circle cx="494.0" cy="177.6" r="2.6"/><circle cx="576.3" cy="204.4" r="2.6"/><circle cx="481.8" cy="188.8" r="2.6"/><circle cx="550.1" cy="237.1" r="2.6"/><circle cx="507.8" cy="224.3" r="2.6"/><circle cx="479.9" cy="196.9" r="2.6"/><circle cx="575.9" cy="197.4" r="2.6"/><circle cx="507.8" cy="209.7" r="2.6"/><circle cx="532.8" cy="151.4" r="2.6"/><circle cx="517.5" cy="192.9" r="2.6"/><circle cx="522.2" cy="172.6" r="2.6"/><circle cx="503.5" cy="192.2" r="2.6"/><circle cx="520.4" cy="189.9" r="2.6"/><circle cx="480.3" cy="210.6" r="2.6"/><circle cx="575.7" cy="187.3" r="2.6"/><circle cx="551.1" cy="215.7" r="2.6"/><circle cx="520.5" cy="236.4" r="2.6"/><circle cx="592.2" cy="168.6" r="2.6"/><circle cx="588.8" cy="239.2" r="2.6"/><circle cx="478.1" cy="225.4" r="2.6"/><circle cx="488.6" cy="259.8" r="2.6"/><circle cx="552.4" cy="230.2" r="2.6"/><circle cx="544.8" cy="171.7" r="2.6"/><circle cx="501.9" cy="224.9" r="2.6"/><circle cx="580.0" cy="255.8" r="2.6"/><circle cx="513.8" cy="244.9" r="2.6"/><circle cx="523.7" cy="228.7" r="2.6"/><circle cx="539.3" cy="224.6" r="2.6"/><circle cx="576.4" cy="234.2" r="2.6"/><circle cx="528.0" cy="189.5" r="2.6"/><circle cx="497.5" cy="229.8" r="2.6"/><circle cx="526.5" cy="222.7" r="2.6"/><circle cx="561.0" cy="232.6" r="2.6"/><circle cx="473.8" cy="190.6" r="2.6"/><circle cx="499.5" cy="230.3" r="2.6"/><circle cx="520.8" cy="175.8" r="2.6"/><circle cx="561.2" cy="204.7" r="2.6"/><circle cx="541.1" cy="223.4" r="2.6"/><circle cx="596.1" cy="178.4" r="2.6"/><circle cx="499.1" cy="182.2" r="2.6"/><circle cx="480.1" cy="235.2" r="2.6"/><circle cx="504.7" cy="161.0" r="2.6"/><circle cx="606.7" cy="209.2" r="2.6"/><circle cx="512.4" cy="168.9" r="2.6"/><circle cx="511.1" cy="160.6" r="2.6"/><circle cx="495.0" cy="179.8" r="2.6"/><circle cx="501.0" cy="156.3" r="2.6"/><circle cx="536.5" cy="229.9" r="2.6"/><circle cx="534.2" cy="189.3" r="2.6"/><circle cx="577.7" cy="170.3" r="2.6"/><circle cx="559.4" cy="219.8" r="2.6"/><circle cx="538.4" cy="235.0" r="2.6"/><circle cx="542.8" cy="245.5" r="2.6"/><circle cx="512.7" cy="206.6" r="2.6"/><circle cx="497.9" cy="248.9" r="2.6"/><circle cx="529.3" cy="200.3" r="2.6"/><circle cx="557.3" cy="196.4" r="2.6"/><circle cx="595.6" cy="210.5" r="2.6"/><circle cx="583.0" cy="240.9" r="2.6"/><circle cx="557.5" cy="186.6" r="2.6"/><circle cx="603.5" cy="228.2" r="2.6"/><circle cx="603.2" cy="212.5" r="2.6"/><circle cx="516.4" cy="260.6" r="2.6"/><circle cx="567.2" cy="226.2" r="2.6"/><circle cx="564.7" cy="203.8" r="2.6"/><circle cx="562.7" cy="207.3" r="2.6"/><circle cx="506.2" cy="222.8" r="2.6"/><circle cx="532.4" cy="195.5" r="2.6"/><circle cx="503.1" cy="180.3" r="2.6"/><circle cx="454.9" cy="249.7" r="2.6"/><circle cx="558.8" cy="199.2" r="2.6"/><circle cx="610.7" cy="176.1" r="2.6"/><circle cx="494.3" cy="242.9" r="2.6"/><circle cx="533.3" cy="211.4" r="2.6"/><circle cx="560.6" cy="225.4" r="2.6"/><circle cx="505.2" cy="232.3" r="2.6"/><circle cx="531.3" cy="235.8" r="2.6"/><circle cx="527.2" cy="186.2" r="2.6"/><circle cx="525.5" cy="243.3" r="2.6"/><circle cx="552.4" cy="185.3" r="2.6"/><circle cx="498.5" cy="221.8" r="2.6"/><circle cx="470.5" cy="242.3" r="2.6"/><circle cx="488.3" cy="252.5" r="2.6"/><circle cx="576.2" cy="223.3" r="2.6"/><circle cx="548.3" cy="207.5" r="2.6"/><circle cx="524.9" cy="246.0" r="2.6"/><circle cx="513.8" cy="213.3" r="2.6"/><circle cx="546.7" cy="168.4" r="2.6"/><circle cx="565.1" cy="245.8" r="2.6"/><circle cx="515.5" cy="190.9" r="2.6"/><circle cx="560.2" cy="231.3" r="2.6"/><circle cx="486.5" cy="172.6" r="2.6"/><circle cx="512.8" cy="195.7" r="2.6"/><circle cx="593.9" cy="209.3" r="2.6"/><circle cx="532.4" cy="218.6" r="2.6"/><circle cx="563.3" cy="199.1" r="2.6"/><circle cx="548.3" cy="160.7" r="2.6"/><circle cx="551.0" cy="171.1" r="2.6"/><circle cx="498.4" cy="218.5" r="2.6"/><circle cx="557.4" cy="235.8" r="2.6"/><circle cx="475.5" cy="212.9" r="2.6"/><circle cx="511.9" cy="198.1" r="2.6"/><circle cx="593.5" cy="224.5" r="2.6"/><circle cx="489.1" cy="219.7" r="2.6"/><circle cx="508.4" cy="226.9" r="2.6"/><circle cx="575.5" cy="192.2" r="2.6"/><circle cx="546.4" cy="217.8" r="2.6"/><circle cx="569.1" cy="213.0" r="2.6"/><circle cx="598.0" cy="210.0" r="2.6"/><circle cx="528.5" cy="188.1" r="2.6"/><circle cx="549.5" cy="248.2" r="2.6"/><circle cx="467.6" cy="224.0" r="2.6"/><circle cx="564.3" cy="262.3" r="2.6"/><circle cx="515.0" cy="152.8" r="2.6"/><circle cx="580.3" cy="221.1" r="2.6"/><circle cx="557.0" cy="208.2" r="2.6"/><circle cx="508.7" cy="236.0" r="2.6"/><circle cx="580.0" cy="231.4" r="2.6"/><circle cx="525.3" cy="226.3" r="2.6"/><circle cx="472.5" cy="217.0" r="2.6"/><circle cx="603.9" cy="242.9" r="2.6"/><circle cx="528.3" cy="172.8" r="2.6"/><circle cx="548.7" cy="211.2" r="2.6"/><circle cx="554.2" cy="200.9" r="2.6"/><circle cx="528.3" cy="236.8" r="2.6"/><circle cx="536.1" cy="217.7" r="2.6"/><circle cx="506.3" cy="260.9" r="2.6"/><circle cx="554.1" cy="248.5" r="2.6"/><circle cx="564.3" cy="238.5" r="2.6"/><circle cx="556.7" cy="193.4" r="2.6"/><circle cx="563.9" cy="221.0" r="2.6"/><circle cx="455.4" cy="198.1" r="2.6"/><circle cx="505.4" cy="259.9" r="2.6"/><circle cx="487.3" cy="202.5" r="2.6"/><circle cx="554.9" cy="199.7" r="2.6"/><circle cx="558.2" cy="177.0" r="2.6"/><circle cx="517.5" cy="211.4" r="2.6"/><circle cx="520.4" cy="220.2" r="2.6"/><circle cx="525.5" cy="204.7" r="2.6"/><circle cx="511.0" cy="206.7" r="2.6"/><circle cx="566.1" cy="220.2" r="2.6"/><circle cx="552.0" cy="238.9" r="2.6"/><circle cx="498.0" cy="156.7" r="2.6"/><circle cx="525.1" cy="172.5" r="2.6"/><circle cx="528.6" cy="219.1" r="2.6"/><circle cx="441.1" cy="188.4" r="2.6"/><circle cx="554.7" cy="233.0" r="2.6"/><circle cx="553.3" cy="191.6" r="2.6"/><circle cx="533.3" cy="229.0" r="2.6"/><circle cx="555.7" cy="224.8" r="2.6"/><circle cx="510.3" cy="253.8" r="2.6"/><circle cx="534.5" cy="171.9" r="2.6"/><circle cx="511.2" cy="227.2" r="2.6"/><circle cx="479.3" cy="218.1" r="2.6"/><circle cx="562.5" cy="216.1" r="2.6"/><circle cx="553.3" cy="176.6" r="2.6"/><circle cx="495.8" cy="229.9" r="2.6"/><circle cx="554.2" cy="220.3" r="2.6"/><circle cx="488.9" cy="211.3" r="2.6"/><circle cx="545.8" cy="177.0" r="2.6"/><circle cx="496.6" cy="200.5" r="2.6"/><circle cx="558.6" cy="213.6" r="2.6"/><circle cx="467.1" cy="154.7" r="2.6"/><circle cx="546.6" cy="202.7" r="2.6"/><circle cx="491.3" cy="210.5" r="2.6"/><circle cx="597.2" cy="172.0" r="2.6"/><circle cx="590.7" cy="211.5" r="2.6"/><circle cx="574.6" cy="230.5" r="2.6"/><circle cx="523.2" cy="191.3" r="2.6"/><circle cx="525.0" cy="192.7" r="2.6"/><circle cx="524.1" cy="202.3" r="2.6"/><circle cx="611.5" cy="192.6" r="2.6"/><circle cx="573.0" cy="256.0" r="2.6"/><circle cx="507.1" cy="182.1" r="2.6"/><circle cx="467.1" cy="224.0" r="2.6"/><circle cx="517.0" cy="174.2" r="2.6"/><circle cx="462.1" cy="227.6" r="2.6"/><circle cx="530.4" cy="207.4" r="2.6"/><circle cx="466.6" cy="172.8" r="2.6"/><circle cx="556.7" cy="170.6" r="2.6"/><circle cx="552.8" cy="191.1" r="2.6"/><circle cx="519.6" cy="219.6" r="2.6"/><circle cx="483.3" cy="197.7" r="2.6"/><circle cx="483.0" cy="175.6" r="2.6"/><circle cx="549.9" cy="230.1" r="2.6"/><circle cx="536.6" cy="261.5" r="2.6"/><circle cx="489.9" cy="233.0" r="2.6"/><circle cx="474.8" cy="230.5" r="2.6"/><circle cx="521.1" cy="232.4" r="2.6"/><circle cx="496.6" cy="249.0" r="2.6"/><circle cx="452.8" cy="193.9" r="2.6"/><circle cx="513.0" cy="173.2" r="2.6"/><circle cx="484.8" cy="227.1" r="2.6"/><circle cx="555.2" cy="167.1" r="2.6"/><circle cx="567.5" cy="183.8" r="2.6"/><circle cx="475.8" cy="194.9" r="2.6"/><circle cx="487.4" cy="203.0" r="2.6"/><circle cx="605.8" cy="193.8" r="2.6"/><circle cx="536.4" cy="184.6" r="2.6"/><circle cx="522.7" cy="188.1" r="2.6"/><circle cx="524.5" cy="184.5" r="2.6"/><circle cx="496.7" cy="215.4" r="2.6"/><circle cx="566.1" cy="221.9" r="2.6"/><circle cx="506.6" cy="255.5" r="2.6"/><circle cx="526.1" cy="240.4" r="2.6"/><circle cx="555.1" cy="160.4" r="2.6"/><circle cx="512.4" cy="233.5" r="2.6"/><circle cx="525.0" cy="219.4" r="2.6"/><circle cx="486.1" cy="212.0" r="2.6"/><circle cx="499.2" cy="179.2" r="2.6"/><circle cx="478.5" cy="190.9" r="2.6"/><circle cx="496.9" cy="205.4" r="2.6"/><circle cx="496.2" cy="240.0" r="2.6"/><circle cx="508.0" cy="164.6" r="2.6"/><circle cx="508.8" cy="234.4" r="2.6"/><circle cx="459.0" cy="194.2" r="2.6"/><circle cx="439.1" cy="199.2" r="2.6"/><circle cx="466.3" cy="167.0" r="2.6"/><circle cx="452.2" cy="225.9" r="2.6"/><circle cx="488.4" cy="179.9" r="2.6"/><circle cx="457.3" cy="250.1" r="2.6"/><circle cx="471.4" cy="240.0" r="2.6"/><circle cx="468.3" cy="251.3" r="2.6"/><circle cx="458.4" cy="195.0" r="2.6"/><circle cx="469.8" cy="233.6" r="2.6"/><circle cx="456.6" cy="212.3" r="2.6"/><circle cx="439.2" cy="227.3" r="2.6"/><circle cx="493.7" cy="211.3" r="2.6"/><circle cx="464.7" cy="194.1" r="2.6"/><circle cx="518.2" cy="234.9" r="2.6"/><circle cx="530.1" cy="220.2" r="2.6"/><circle cx="450.7" cy="189.5" r="2.6"/><circle cx="451.9" cy="176.2" r="2.6"/><circle cx="467.7" cy="222.8" r="2.6"/><circle cx="473.8" cy="202.3" r="2.6"/><circle cx="527.9" cy="230.2" r="2.6"/><circle cx="463.2" cy="190.0" r="2.6"/><circle cx="445.7" cy="214.2" r="2.6"/><circle cx="458.2" cy="216.0" r="2.6"/><circle cx="469.0" cy="193.3" r="2.6"/><circle cx="469.4" cy="228.0" r="2.6"/><circle cx="507.9" cy="232.1" r="2.6"/><circle cx="501.9" cy="231.9" r="2.6"/><circle cx="443.3" cy="207.9" r="2.6"/><circle cx="472.4" cy="198.0" r="2.6"/><circle cx="508.2" cy="223.9" r="2.6"/><circle cx="466.7" cy="231.2" r="2.6"/><circle cx="459.3" cy="168.8" r="2.6"/><circle cx="459.3" cy="227.8" r="2.6"/><circle cx="469.7" cy="175.6" r="2.6"/><circle cx="527.1" cy="190.7" r="2.6"/><circle cx="458.9" cy="223.0" r="2.6"/><circle cx="500.3" cy="193.5" r="2.6"/><circle cx="479.4" cy="239.6" r="2.6"/><circle cx="466.0" cy="229.9" r="2.6"/><circle cx="520.3" cy="209.9" r="2.6"/><circle cx="464.9" cy="210.9" r="2.6"/><circle cx="468.3" cy="208.0" r="2.6"/><circle cx="449.9" cy="202.8" r="2.6"/><circle cx="470.7" cy="185.2" r="2.6"/><circle cx="486.8" cy="191.2" r="2.6"/><circle cx="451.3" cy="209.8" r="2.6"/><circle cx="508.6" cy="183.1" r="2.6"/><circle cx="472.6" cy="224.3" r="2.6"/><circle cx="519.9" cy="178.9" r="2.6"/><circle cx="484.9" cy="236.9" r="2.6"/><circle cx="477.1" cy="208.4" r="2.6"/><circle cx="486.2" cy="250.9" r="2.6"/><circle cx="471.1" cy="212.6" r="2.6"/><circle cx="517.9" cy="252.5" r="2.6"/><circle cx="515.3" cy="176.4" r="2.6"/><circle cx="451.0" cy="233.8" r="2.6"/><circle cx="490.1" cy="203.9" r="2.6"/><circle cx="479.7" cy="189.4" r="2.6"/><circle cx="472.0" cy="186.1" r="2.6"/><circle cx="478.8" cy="235.5" r="2.6"/><circle cx="447.6" cy="170.6" r="2.6"/><circle cx="438.9" cy="196.9" r="2.6"/><circle cx="511.1" cy="222.1" r="2.6"/><circle cx="456.4" cy="209.0" r="2.6"/><circle cx="499.0" cy="239.7" r="2.6"/><circle cx="452.0" cy="200.4" r="2.6"/><circle cx="466.5" cy="187.3" r="2.6"/><circle cx="481.9" cy="209.0" r="2.6"/><circle cx="465.1" cy="206.0" r="2.6"/><circle cx="470.6" cy="190.7" r="2.6"/><circle cx="471.8" cy="229.7" r="2.6"/><circle cx="497.6" cy="212.2" r="2.6"/><circle cx="472.5" cy="204.4" r="2.6"/><circle cx="479.5" cy="250.8" r="2.6"/><circle cx="458.8" cy="211.9" r="2.6"/><circle cx="492.7" cy="218.9" r="2.6"/><circle cx="471.7" cy="192.0" r="2.6"/><circle cx="459.1" cy="189.4" r="2.6"/><circle cx="515.3" cy="206.8" r="2.6"/><circle cx="465.5" cy="223.3" r="2.6"/><circle cx="472.9" cy="162.1" r="2.6"/><circle cx="465.0" cy="224.3" r="2.6"/><circle cx="523.7" cy="212.8" r="2.6"/><circle cx="463.2" cy="233.8" r="2.6"/><circle cx="505.7" cy="215.8" r="2.6"/><circle cx="480.4" cy="224.6" r="2.6"/><circle cx="485.6" cy="195.2" r="2.6"/><circle cx="521.6" cy="169.1" r="2.6"/><circle cx="442.5" cy="185.0" r="2.6"/><circle cx="508.6" cy="256.4" r="2.6"/><circle cx="469.6" cy="226.9" r="2.6"/><circle cx="442.1" cy="180.4" r="2.6"/><circle cx="485.0" cy="158.0" r="2.6"/><circle cx="453.4" cy="186.2" r="2.6"/><circle cx="475.7" cy="220.6" r="2.6"/><circle cx="505.5" cy="208.1" r="2.6"/><circle cx="453.9" cy="204.7" r="2.6"/><circle cx="527.0" cy="252.3" r="2.6"/><circle cx="473.4" cy="220.1" r="2.6"/><circle cx="444.9" cy="186.3" r="2.6"/><circle cx="528.2" cy="200.7" r="2.6"/><circle cx="459.1" cy="160.8" r="2.6"/><circle cx="457.5" cy="229.4" r="2.6"/><circle cx="449.2" cy="183.5" r="2.6"/><circle cx="471.4" cy="205.3" r="2.6"/><circle cx="448.0" cy="199.8" r="2.6"/><circle cx="467.9" cy="159.5" r="2.6"/><circle cx="468.0" cy="238.6" r="2.6"/><circle cx="526.9" cy="201.9" r="2.6"/><circle cx="468.3" cy="196.4" r="2.6"/><circle cx="468.0" cy="173.8" r="2.6"/><circle cx="501.1" cy="231.7" r="2.6"/><circle cx="458.1" cy="196.0" r="2.6"/><circle cx="540.5" cy="199.1" r="2.6"/><circle cx="477.8" cy="226.0" r="2.6"/><circle cx="456.0" cy="224.1" r="2.6"/><circle cx="469.0" cy="237.0" r="2.6"/><circle cx="455.6" cy="242.5" r="2.6"/><circle cx="508.1" cy="191.2" r="2.6"/><circle cx="463.7" cy="216.6" r="2.6"/><circle cx="496.0" cy="204.3" r="2.6"/><circle cx="462.9" cy="231.4" r="2.6"/><circle cx="466.2" cy="225.2" r="2.6"/><circle cx="464.5" cy="177.5" r="2.6"/><circle cx="454.2" cy="206.2" r="2.6"/><circle cx="444.1" cy="186.6" r="2.6"/><circle cx="451.0" cy="193.0" r="2.6"/><circle cx="500.5" cy="218.0" r="2.6"/><circle cx="481.2" cy="168.9" r="2.6"/><circle cx="501.5" cy="208.5" r="2.6"/><circle cx="466.0" cy="200.6" r="2.6"/><circle cx="474.7" cy="210.3" r="2.6"/><circle cx="501.6" cy="211.5" r="2.6"/><circle cx="471.1" cy="186.2" r="2.6"/><circle cx="456.1" cy="198.2" r="2.6"/><circle cx="502.7" cy="229.5" r="2.6"/><circle cx="466.9" cy="232.1" r="2.6"/><circle cx="457.8" cy="165.4" r="2.6"/><circle cx="505.2" cy="220.7" r="2.6"/><circle cx="500.7" cy="221.3" r="2.6"/><circle cx="460.6" cy="215.0" r="2.6"/><circle cx="494.5" cy="181.0" r="2.6"/><circle cx="463.4" cy="201.1" r="2.6"/><circle cx="481.6" cy="232.6" r="2.6"/><circle cx="496.5" cy="224.8" r="2.6"/><circle cx="484.2" cy="182.2" r="2.6"/><circle cx="445.6" cy="217.7" r="2.6"/><circle cx="443.4" cy="213.2" r="2.6"/><circle cx="467.0" cy="206.8" r="2.6"/><circle cx="472.4" cy="230.5" r="2.6"/><circle cx="462.3" cy="214.8" r="2.6"/><circle cx="491.9" cy="243.8" r="2.6"/><circle cx="462.9" cy="238.9" r="2.6"/><circle cx="463.9" cy="199.0" r="2.6"/><circle cx="526.7" cy="167.5" r="2.6"/><circle cx="467.5" cy="199.3" r="2.6"/><circle cx="453.2" cy="215.4" r="2.6"/><circle cx="473.3" cy="179.9" r="2.6"/><circle cx="532.3" cy="233.1" r="2.6"/><circle cx="476.0" cy="215.1" r="2.6"/><circle cx="512.8" cy="215.6" r="2.6"/><circle cx="483.1" cy="207.2" r="2.6"/><circle cx="484.6" cy="203.4" r="2.6"/><circle cx="535.0" cy="190.2" r="2.6"/><circle cx="520.9" cy="179.6" r="2.6"/><circle cx="516.7" cy="224.5" r="2.6"/><circle cx="574.2" cy="189.4" r="2.6"/><circle cx="556.9" cy="167.0" r="2.6"/><circle cx="547.3" cy="202.3" r="2.6"/><circle cx="489.5" cy="231.3" r="2.6"/><circle cx="502.1" cy="175.3" r="2.6"/><circle cx="511.1" cy="190.2" r="2.6"/><circle cx="564.8" cy="230.0" r="2.6"/><circle cx="571.2" cy="200.0" r="2.6"/><circle cx="543.7" cy="239.1" r="2.6"/><circle cx="527.6" cy="205.9" r="2.6"/><circle cx="541.3" cy="246.9" r="2.6"/><circle cx="480.2" cy="209.1" r="2.6"/><circle cx="554.4" cy="168.6" r="2.6"/><circle cx="566.3" cy="174.8" r="2.6"/><circle cx="569.8" cy="235.8" r="2.6"/><circle cx="503.3" cy="192.8" r="2.6"/><circle cx="490.4" cy="220.5" r="2.6"/><circle cx="552.8" cy="250.4" r="2.6"/><circle cx="568.2" cy="177.8" r="2.6"/><circle cx="560.4" cy="184.5" r="2.6"/><circle cx="509.3" cy="225.5" r="2.6"/><circle cx="519.7" cy="182.4" r="2.6"/><circle cx="538.3" cy="246.9" r="2.6"/><circle cx="516.8" cy="231.4" r="2.6"/><circle cx="490.3" cy="227.8" r="2.6"/><circle cx="574.2" cy="227.3" r="2.6"/><circle cx="551.4" cy="230.6" r="2.6"/><circle cx="534.4" cy="189.0" r="2.6"/><circle cx="559.4" cy="216.4" r="2.6"/><circle cx="530.9" cy="177.1" r="2.6"/><circle cx="526.6" cy="254.1" r="2.6"/><circle cx="572.8" cy="189.5" r="2.6"/><circle cx="537.7" cy="227.2" r="2.6"/><circle cx="559.5" cy="210.5" r="2.6"/><circle cx="516.0" cy="184.1" r="2.6"/><circle cx="569.2" cy="205.5" r="2.6"/><circle cx="492.2" cy="185.2" r="2.6"/><circle cx="572.7" cy="186.3" r="2.6"/><circle cx="528.0" cy="215.2" r="2.6"/><circle cx="534.7" cy="201.1" r="2.6"/><circle cx="547.6" cy="212.9" r="2.6"/><circle cx="573.9" cy="175.0" r="2.6"/><circle cx="549.1" cy="170.9" r="2.6"/><circle cx="506.0" cy="222.4" r="2.6"/><circle cx="562.8" cy="178.8" r="2.6"/><circle cx="527.9" cy="245.9" r="2.6"/><circle cx="581.7" cy="222.8" r="2.6"/><circle cx="554.2" cy="244.0" r="2.6"/><circle cx="530.5" cy="180.8" r="2.6"/><circle cx="544.0" cy="240.0" r="2.6"/><circle cx="510.9" cy="179.9" r="2.6"/><circle cx="571.7" cy="199.5" r="2.6"/><circle cx="574.3" cy="212.4" r="2.6"/><circle cx="543.8" cy="213.6" r="2.6"/><circle cx="524.0" cy="176.1" r="2.6"/><circle cx="576.8" cy="217.2" r="2.6"/><circle cx="556.5" cy="246.0" r="2.6"/><circle cx="547.7" cy="209.0" r="2.6"/><circle cx="504.6" cy="204.7" r="2.6"/><circle cx="535.5" cy="181.5" r="2.6"/><circle cx="491.0" cy="189.8" r="2.6"/><circle cx="508.9" cy="196.3" r="2.6"/><circle cx="552.0" cy="166.1" r="2.6"/><circle cx="567.3" cy="218.0" r="2.6"/><circle cx="550.7" cy="254.1" r="2.6"/><circle cx="544.8" cy="194.1" r="2.6"/><circle cx="554.6" cy="225.3" r="2.6"/><circle cx="555.8" cy="201.5" r="2.6"/><circle cx="558.6" cy="237.9" r="2.6"/><circle cx="576.8" cy="210.3" r="2.6"/><circle cx="494.1" cy="214.6" r="2.6"/><circle cx="530.8" cy="233.5" r="2.6"/><circle cx="528.5" cy="189.2" r="2.6"/><circle cx="600.2" cy="204.9" r="2.6"/><circle cx="532.7" cy="166.1" r="2.6"/><circle cx="561.9" cy="233.4" r="2.6"/><circle cx="533.1" cy="182.1" r="2.6"/><circle cx="529.1" cy="209.1" r="2.6"/><circle cx="513.7" cy="193.6" r="2.6"/><circle cx="525.8" cy="243.9" r="2.6"/><circle cx="523.1" cy="228.5" r="2.6"/><circle cx="542.9" cy="251.4" r="2.6"/><circle cx="530.7" cy="195.6" r="2.6"/><circle cx="598.8" cy="199.2" r="2.6"/><circle cx="538.5" cy="192.8" r="2.6"/><circle cx="573.4" cy="225.1" r="2.6"/><circle cx="537.3" cy="197.0" r="2.6"/><circle cx="595.0" cy="201.3" r="2.6"/><circle cx="585.0" cy="208.5" r="2.6"/><circle cx="528.3" cy="251.1" r="2.6"/><circle cx="573.0" cy="248.8" r="2.6"/><circle cx="579.7" cy="242.1" r="2.6"/><circle cx="500.0" cy="188.2" r="2.6"/><circle cx="548.3" cy="187.5" r="2.6"/><circle cx="496.7" cy="214.5" r="2.6"/><circle cx="528.4" cy="202.2" r="2.6"/><circle cx="580.2" cy="213.8" r="2.6"/><circle cx="503.0" cy="206.9" r="2.6"/><circle cx="595.9" cy="226.2" r="2.6"/><circle cx="579.9" cy="221.7" r="2.6"/><circle cx="504.0" cy="205.8" r="2.6"/><circle cx="564.0" cy="213.9" r="2.6"/><circle cx="543.3" cy="199.3" r="2.6"/><circle cx="509.9" cy="185.4" r="2.6"/><circle cx="512.3" cy="204.3" r="2.6"/><circle cx="521.9" cy="190.0" r="2.6"/><circle cx="565.1" cy="178.1" r="2.6"/><circle cx="546.0" cy="190.7" r="2.6"/><circle cx="504.0" cy="184.8" r="2.6"/><circle cx="549.0" cy="207.1" r="2.6"/><circle cx="583.6" cy="194.6" r="2.6"/><circle cx="543.8" cy="214.8" r="2.6"/><circle cx="513.7" cy="222.8" r="2.6"/><circle cx="595.5" cy="187.2" r="2.6"/><circle cx="508.5" cy="219.9" r="2.6"/><circle cx="556.8" cy="177.6" r="2.6"/><circle cx="503.6" cy="195.9" r="2.6"/><circle cx="571.7" cy="216.9" r="2.6"/><circle cx="556.9" cy="224.0" r="2.6"/><circle cx="525.2" cy="241.2" r="2.6"/><circle cx="503.9" cy="189.0" r="2.6"/><circle cx="562.3" cy="194.5" r="2.6"/><circle cx="518.5" cy="200.0" r="2.6"/><circle cx="545.4" cy="206.7" r="2.6"/><circle cx="523.3" cy="183.6" r="2.6"/><circle cx="498.1" cy="195.1" r="2.6"/><circle cx="522.8" cy="192.7" r="2.6"/><circle cx="520.7" cy="204.0" r="2.6"/><circle cx="574.9" cy="235.3" r="2.6"/><circle cx="541.4" cy="242.2" r="2.6"/><circle cx="561.1" cy="186.1" r="2.6"/><circle cx="572.2" cy="210.0" r="2.6"/><circle cx="531.2" cy="221.3" r="2.6"/><circle cx="553.6" cy="203.4" r="2.6"/><circle cx="593.3" cy="207.4" r="2.6"/><circle cx="520.2" cy="243.1" r="2.6"/><circle cx="532.7" cy="228.9" r="2.6"/><circle cx="544.6" cy="218.5" r="2.6"/><circle cx="518.4" cy="236.9" r="2.6"/><circle cx="574.1" cy="191.4" r="2.6"/><circle cx="549.3" cy="214.0" r="2.6"/><circle cx="523.9" cy="214.5" r="2.6"/><circle cx="582.6" cy="194.6" r="2.6"/><circle cx="534.8" cy="228.9" r="2.6"/><circle cx="520.9" cy="178.9" r="2.6"/><circle cx="521.1" cy="214.8" r="2.6"/></g><path d="M371.5 204.71 L691.5 216.80" stroke="#d32c46" stroke-width="1.9" fill="none"/></svg>
<span style="top:297.00px;font-size:15.5px;line-height:22px;letter-spacing:-0.225px;right:347.83px;">106</span>
<span style="top:275.00px;font-size:15.5px;line-height:22px;letter-spacing:-0.225px;right:347.83px;">108</span>
<span style="top:254.00px;font-size:15.5px;line-height:22px;letter-spacing:0.16px;right:347.44px;">110</span>
<span style="top:232.00px;font-size:15.5px;line-height:22px;letter-spacing:0.16px;right:347.44px;">112</span>
<span style="top:210.00px;font-size:15.5px;line-height:22px;letter-spacing:0.16px;right:347.44px;">114</span>
<span style="top:188.00px;font-size:15.5px;line-height:22px;letter-spacing:0.16px;right:347.44px;">116</span>
<span style="top:166.00px;font-size:15.5px;line-height:22px;letter-spacing:0.16px;right:347.44px;">118</span>
<span style="top:144.00px;font-size:15.5px;line-height:22px;letter-spacing:-0.225px;right:347.83px;">120</span>
<span style="top:123.00px;font-size:15.5px;line-height:22px;letter-spacing:-0.225px;right:347.83px;">122</span>
<span style="top:101.00px;font-size:15.5px;line-height:22px;letter-spacing:-0.225px;right:347.83px;">124</span>
<span style="top:79.00px;font-size:15.5px;line-height:22px;letter-spacing:-0.225px;right:347.83px;">126</span>
<span style="top:325.00px;font-size:15.5px;line-height:22px;letter-spacing:-0.292px;left:362.5px;">100</span>
<span style="top:325.00px;font-size:15.5px;line-height:22px;letter-spacing:-0.292px;left:394.55555555555554px;">150</span>
<span style="top:325.00px;font-size:15.5px;line-height:22px;letter-spacing:-0.292px;left:430.1111111111111px;">200</span>
<span style="top:325.00px;font-size:15.5px;line-height:22px;letter-spacing:-0.292px;left:465.6666666666667px;">250</span>
<span style="top:325.00px;font-size:15.5px;line-height:22px;letter-spacing:-0.292px;left:501.2222222222222px;">300</span>
<span style="top:325.00px;font-size:15.5px;line-height:22px;letter-spacing:-0.292px;left:536.7777777777778px;">350</span>
<span style="top:325.00px;font-size:15.5px;line-height:22px;letter-spacing:-0.292px;left:572.3333333333334px;">400</span>
<span style="top:325.00px;font-size:15.5px;line-height:22px;letter-spacing:-0.292px;left:607.8888888888889px;">450</span>
<span style="top:325.00px;font-size:15.5px;line-height:22px;letter-spacing:-0.292px;left:643.4444444444445px;">500</span>
<span style="top:325.00px;font-size:15.5px;line-height:22px;letter-spacing:-0.292px;left:675.0px;">550</span>
<span style="top:198.00px;font-size:16.5px;line-height:23px;letter-spacing:-0.254px;left:319.3px;transform:translate(-50%,-50%) rotate(-90deg);">NPN1</span>
<span style="top:350.00px;font-size:16.5px;line-height:23px;letter-spacing:0.223px;left:509px;">PNP1</span>
<div style="left:299px;top:380px;width:150px;height:22px;border:1px solid #adadad;box-sizing:border-box;"></div>
<svg style="left:309.5px;top:386.5px" width="13" height="11" viewBox="0 0 13 11"><rect x="0.5" y="0.5" width="12" height="10" rx="2" fill="#f4f4f4" stroke="#b4b4b4"/><path d="M2.5 3.5 L10.5 3.5 L6.5 8.0 Z" fill="#cc0505"/></svg>
<div style="left:322.5px;top:392px;width:22px;height:2px;background:#d32c46;"></div>
<span style="top:386.00px;font-size:12px;line-height:17px;letter-spacing:-0.484px;left:348px;">Linear Fit SITE==1</span>
<div style="left:312px;top:406px;width:322px;height:22px;background:#ebebeb;border:1px solid #c3c3c3;box-sizing:border-box;"></div>
<svg style="left:302px;top:412px" width="10" height="10" viewBox="0 0 10 10"><path d="M8.5 0.8 L8.5 8.5 L0.8 8.5 Z" fill="#c2c2c2" stroke="#585858" stroke-width="1.15"/></svg>
<span style="top:407.00px;font-size:14px;line-height:20px;font-weight:700;color:#000;letter-spacing:0.269px;left:315.8px;">Linear Fit SITE==1</span>
<span style="top:430.00px;font-size:12px;line-height:17px;letter-spacing:-0.089px;left:311.5px;">NPN1 = 115.67694 - 0.0024624*PNP1</span>
<div style="left:311px;top:445px;width:227px;height:113px;background:#c3e8e8;"></div>
<div style="left:324px;top:447px;width:213px;height:22px;background:#bde2e2;border:1px solid #9cc4c4;box-sizing:border-box;"></div>
<svg style="left:314px;top:453px" width="10" height="10" viewBox="0 0 10 10"><path d="M8.5 0.8 L8.5 8.5 L0.8 8.5 Z" fill="#a3cbcb" stroke="#5e8080" stroke-width="1"/></svg>
<span style="top:448.00px;font-size:14px;line-height:20px;font-weight:700;color:#001a1a;letter-spacing:0.292px;left:327.6px;">Summary of Fit</span>
<div style="left:323px;top:470px;width:155px;height:85px;background:#b2dad8;"></div>
<span style="top:472.00px;font-size:12px;line-height:17px;color:#0a2a2a;letter-spacing:-0.625px;left:326.4px;">RSquare</span>
<span style="top:489.00px;font-size:12px;line-height:17px;color:#0a2a2a;letter-spacing:-0.308px;left:326.4px;">RSquare Adj</span>
<span style="top:506.00px;font-size:12px;line-height:17px;color:#0a2a2a;letter-spacing:-0.261px;left:326.4px;">Root Mean Square Error</span>
<span style="top:523.00px;font-size:12px;line-height:17px;color:#0a2a2a;letter-spacing:-0.233px;left:326.4px;">Mean of Response</span>
<span style="top:540.00px;font-size:12px;line-height:17px;color:#0a2a2a;letter-spacing:-0.168px;left:326.4px;">Observations (or Sum Wgts)</span>
<span style="top:472.00px;font-size:12px;line-height:17px;color:#0a2a2a;letter-spacing:-0.258px;right:177.86px;">0.002882</span>
<span style="top:489.00px;font-size:12px;line-height:17px;color:#0a2a2a;letter-spacing:-0.172px;right:177.77px;">-0.00057</span>
<span style="top:506.00px;font-size:12px;line-height:17px;color:#0a2a2a;letter-spacing:-0.258px;right:177.86px;">2.626105</span>
<span style="top:523.00px;font-size:12px;line-height:17px;color:#0a2a2a;letter-spacing:-0.146px;right:177.75px;">114.8949</span>
<span style="top:540.00px;font-size:12px;line-height:17px;color:#0a2a2a;letter-spacing:-0.344px;right:177.94px;">291</span>
<div style="left:324px;top:560px;width:309px;height:22px;background:#ebebeb;border:1px solid #c3c3c3;box-sizing:border-box;"></div>
<svg style="left:314px;top:566px" width="10" height="10" viewBox="0 0 10 10"><path d="M8.5 0.8 L8.5 8.5 L0.8 8.5 Z" fill="#c2c2c2" stroke="#585858" stroke-width="1.15"/></svg>
<span style="top:561.00px;font-size:14px;line-height:20px;font-weight:700;color:#000;letter-spacing:0.091px;left:327.3px;">Analysis of Variance</span>
<div style="left:323px;top:583px;width:49px;height:32px;background:#e0e0e0;"></div>
<div style="left:373px;top:583px;width:44px;height:32px;background:#e0e0e0;"></div>
<div style="left:418px;top:583px;width:69px;height:32px;background:#e0e0e0;"></div>
<div style="left:489px;top:583px;width:84px;height:32px;background:#e0e0e0;"></div>
<div style="left:574px;top:583px;width:58px;height:32px;background:#e0e0e0;"></div>
<div style="left:323px;top:616px;width:49px;height:51px;background:#e0e0e0;"></div>
<div style="left:574px;top:633px;width:58px;height:16px;background:#e0e0e0;"></div>
<span style="top:600.00px;font-size:12px;line-height:17px;font-weight:700;color:#000;letter-spacing:-0.448px;left:326.2px;">Source</span>
<span style="top:600.00px;font-size:12px;line-height:17px;font-weight:700;color:#000;letter-spacing:-0.5px;right:297.30px;">DF</span>
<span style="top:584.00px;font-size:12px;line-height:17px;font-weight:700;color:#000;letter-spacing:-0.195px;right:226.50px;">Sum of</span>
<span style="top:600.00px;font-size:12px;line-height:17px;font-weight:700;color:#000;letter-spacing:-0.523px;right:226.82px;">Squares</span>
<span style="top:600.00px;font-size:12px;line-height:17px;font-weight:700;color:#000;letter-spacing:-0.155px;right:141.45px;">Mean Square</span>
<span style="top:600.00px;font-size:12px;line-height:17px;font-weight:700;color:#000;letter-spacing:-0.382px;right:83.38px;">F Ratio</span>
<span style="top:618.00px;font-size:12px;line-height:17px;letter-spacing:0.263px;left:326.2px;">Model</span>
<span style="top:618.00px;font-size:12px;line-height:17px;right:296.80px;">1</span>
<span style="top:618.00px;font-size:12px;line-height:17px;letter-spacing:-0.284px;right:226.58px;">5.7613</span>
<span style="top:618.00px;font-size:12px;line-height:17px;letter-spacing:-0.199px;right:141.50px;">5.76134</span>
<span style="top:635.00px;font-size:12px;line-height:17px;letter-spacing:-0.334px;left:326.2px;">Error</span>
<span style="top:635.00px;font-size:12px;line-height:17px;letter-spacing:-0.344px;right:297.14px;">289</span>
<span style="top:635.00px;font-size:12px;line-height:17px;letter-spacing:-0.359px;right:226.66px;">1993.0679</span>
<span style="top:635.00px;font-size:12px;line-height:17px;letter-spacing:-0.199px;right:141.50px;">6.89643</span>
<span style="top:652.00px;font-size:12px;line-height:17px;letter-spacing:-0.309px;left:326.2px;">C. Total</span>
<span style="top:652.00px;font-size:12px;line-height:17px;letter-spacing:-0.344px;right:297.14px;">290</span>
<span style="top:652.00px;font-size:12px;line-height:17px;letter-spacing:-0.359px;right:226.66px;">1998.8293</span>
<span style="top:618.00px;font-size:12px;line-height:17px;letter-spacing:-0.284px;right:83.28px;">0.8354</span>
<span style="top:634.00px;font-size:12px;line-height:17px;font-weight:700;color:#000;letter-spacing:-0.293px;right:83.29px;">Prob > F</span>
<span style="top:652.00px;font-size:12px;line-height:17px;letter-spacing:-0.284px;right:87.98px;">0.3615</span>
<div style="left:324px;top:672px;width:286px;height:22px;background:#ebebeb;border:1px solid #c3c3c3;box-sizing:border-box;"></div>
<svg style="left:314px;top:678px" width="10" height="10" viewBox="0 0 10 10"><path d="M8.5 0.8 L8.5 8.5 L0.8 8.5 Z" fill="#c2c2c2" stroke="#585858" stroke-width="1.15"/></svg>
<span style="top:673.00px;font-size:14px;line-height:20px;font-weight:700;color:#000;letter-spacing:0.104px;left:327.5px;">Parameter Estimates</span>
<div style="left:323px;top:695px;width:54px;height:16px;background:#e0e0e0;"></div>
<div style="left:378px;top:695px;width:63px;height:16px;background:#e0e0e0;"></div>
<div style="left:443px;top:695px;width:60px;height:16px;background:#e0e0e0;"></div>
<div style="left:505px;top:695px;width:46px;height:16px;background:#e0e0e0;"></div>
<div style="left:552px;top:695px;width:57px;height:16px;background:#e0e0e0;"></div>
<div style="left:323px;top:712px;width:54px;height:34px;background:#e0e0e0;"></div>
<span style="top:696.00px;font-size:12px;line-height:17px;font-weight:700;color:#000;letter-spacing:0.137px;left:326.6px;">Term</span>
<span style="top:696.00px;font-size:12px;line-height:17px;font-weight:700;color:#000;letter-spacing:-0.254px;right:272.75px;">Estimate</span>
<span style="top:696.00px;font-size:12px;line-height:17px;font-weight:700;color:#000;letter-spacing:-0.113px;right:211.31px;">Std Error</span>
<span style="top:696.00px;font-size:12px;line-height:17px;font-weight:700;color:#000;letter-spacing:-0.049px;right:163.35px;">t Ratio</span>
<span style="top:696.00px;font-size:12px;line-height:17px;font-weight:700;color:#000;letter-spacing:0.18px;left:557.7px;">Prob&gt;|t|</span>
<span style="top:714.00px;font-size:12px;line-height:17px;letter-spacing:-0.078px;left:326.6px;">Intercept</span>
<span style="top:731.00px;font-size:12px;line-height:17px;letter-spacing:-0.84px;left:326.6px;">PNP1</span>
<span style="top:714.00px;font-size:12px;line-height:17px;letter-spacing:-0.094px;right:272.59px;">115.67694</span>
<span style="top:731.00px;font-size:12px;line-height:17px;letter-spacing:-0.116px;right:272.62px;">-0.002462</span>
<span style="top:714.00px;font-size:12px;line-height:17px;letter-spacing:-0.258px;right:211.46px;">0.869375</span>
<span style="top:731.00px;font-size:12px;line-height:17px;letter-spacing:-0.258px;right:211.46px;">0.002694</span>
<span style="top:714.00px;font-size:12px;line-height:17px;letter-spacing:-0.117px;right:163.42px;">133.06</span>
<span style="top:731.00px;font-size:12px;line-height:17px;letter-spacing:-0.272px;right:163.57px;">-0.91</span>
<span style="top:714.00px;font-size:12px;line-height:17px;color:#e07a28;letter-spacing:0.04px;left:562px;">&lt;.0001*</span>
<span style="top:731.00px;font-size:12px;line-height:17px;letter-spacing:-0.367px;left:564.5px;">0.3615</span>
<div style="left:287px;top:754px;width:423px;height:22px;background:#e0e5f1;"></div>
<div style="left:287px;top:754px;width:423px;height:1px;background:#b4b9e2;"></div>
<div style="left:284px;top:776px;width:426px;height:5px;background:linear-gradient(#bdbdbd,#e6e6e6)"></div>
<span style="top:758.00px;font-size:12px;line-height:17px;color:#4a5f96;letter-spacing:-0.183px;left:293.8px;">Names Default To Here( boolean )  Determines where unres</span>
<div style="left:610px;top:756px;width:1px;height:19px;background:#a9adc0;"></div>
<svg style="left:616px;top:760px" width="13" height="12" viewBox="0 0 13 12"><path d="M1.6 5.6 H11.2 V10.9 H1.6 Z" fill="#dcedf8" stroke="#8fc6e8" stroke-width="0.8"/><path d="M0.6 5.8 L6.4 0.9 L12.2 5.8" stroke="#2a86d6" stroke-width="1.9" fill="none" stroke-linejoin="miter"/><path d="M6.4 2.6 L2.4 6 H10.4 Z" fill="#f4fafe"/><rect x="5" y="6.2" width="2.8" height="4.6" fill="#a8700f"/><rect x="5.9" y="8" width="0.9" height="1" fill="#e8c878"/></svg>
<svg style="left:632px;top:760px" width="12" height="11" viewBox="0 0 12 11"><rect x="0.6" y="0.6" width="10" height="8.6" fill="#f4f8fd" stroke="#2464b4" stroke-width="1.2"/><path d="M1 2.6 H10.5" stroke="#e45a5a" stroke-width="1.1"/><path d="M1 4.6 H10.5 M1 6.6 H8 M3.6 0.6 V9 M6.2 0.6 V4 M8.6 0.6 V4" stroke="#6a9ad8" stroke-width="0.7"/><circle cx="7" cy="4.6" r="1" fill="#111"/><path d="M8.6 4.8 Q8.8 7.3 11.8 7.5 Q8.8 7.8 8.6 10.8 Q8.3 7.8 5.4 7.5 Q8.3 7.3 8.6 4.8 Z" fill="#3a8fd8"/><circle cx="8.6" cy="7.5" r="1.1" fill="#3a8fd8"/></svg>
<div style="left:656px;top:759px;width:14px;height:12.8px;background:#fff;border:1px solid #555;box-sizing:border-box;"></div>
<svg style="left:676px;top:762px" width="9" height="6" viewBox="0 0 9 6"><path d="M0 0 H9 L4.5 5.5 Z" fill="#111"/></svg>
<div style="left:705.5px;top:764.5px;width:1.6px;height:1.6px;background:#f6f8fc;"></div>
<div style="left:705.5px;top:767.5px;width:1.6px;height:1.6px;background:#f6f8fc;"></div>
<div style="left:702.5px;top:767.5px;width:1.6px;height:1.6px;background:#f6f8fc;"></div>
<div style="left:705.5px;top:770.5px;width:1.6px;height:1.6px;background:#f6f8fc;"></div>
<div style="left:702.5px;top:770.5px;width:1.6px;height:1.6px;background:#f6f8fc;"></div>
<div style="left:699.5px;top:770.5px;width:1.6px;height:1.6px;background:#f6f8fc;"></div>
<div style="left:705.5px;top:773.5px;width:1.6px;height:1.6px;background:#f6f8fc;"></div>
<div style="left:702.5px;top:773.5px;width:1.6px;height:1.6px;background:#f6f8fc;"></div>
<div style="left:699.5px;top:773.5px;width:1.6px;height:1.6px;background:#f6f8fc;"></div>
<div style="left:696.5px;top:773.5px;width:1.6px;height:1.6px;background:#f6f8fc;"></div>
</body></html>
